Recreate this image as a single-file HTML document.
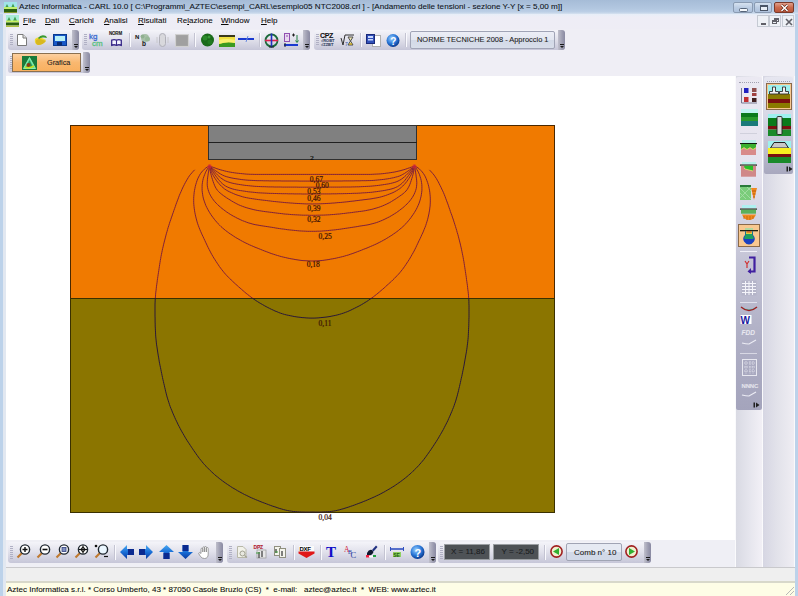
<!DOCTYPE html>
<html><head><meta charset="utf-8">
<style>
*{margin:0;padding:0;box-sizing:border-box}
html,body{width:798px;height:596px;overflow:hidden;background:#bcd2ea;font-family:"Liberation Sans",sans-serif;position:relative}
.a{position:absolute}
svg.a{overflow:visible}
#title{left:0;top:0;width:798px;height:14px;background:linear-gradient(#a6bcd7,#b2c7e0 60%,#bccfe6 85%,#d6e2f0)}
#lframe{left:3px;top:14px;width:3px;height:582px;background:#e2e8f1}
#menu{left:6px;top:14px;width:789px;height:15px;background:linear-gradient(#e6eef8,#eeedf6 20%,#eeedf5)}
#tbarea{left:6px;top:29px;width:789px;height:47px;background:#efeef5}
.tb{position:absolute;border-radius:3px;background:linear-gradient(#f4f4f9 0%,#e2e2ec 45%,#c6c6d8 100%)}
.grip{position:absolute;right:0;top:0;bottom:0;width:7px;border-radius:0 3px 3px 0;background:linear-gradient(90deg,#c0c0cc,#9c9cb0 60%,#8a8aa2)}
.grip:before{content:"";position:absolute;left:1.5px;bottom:5px;width:4px;height:1px;background:#1a1a1a}.grip:after{content:"";position:absolute;left:1.5px;bottom:2px;width:0;height:0;border-left:2px solid transparent;border-right:2px solid transparent;border-top:2.5px solid #1a1a1a}
.dots{position:absolute;left:2px;top:4px;bottom:4px;width:3px;background:repeating-linear-gradient(#b0b0c4 0 1px,transparent 1px 2px)}
.vsep{position:absolute;top:3px;bottom:3px;width:2px;border-left:1px solid #c4c4d2;border-right:1px solid #fafafe}
.ic{position:absolute}
#draw{left:6px;top:76px;width:729px;height:464px;background:#fff}
#dock{left:735px;top:76px;width:60px;height:491px;background:#fafafc}
#dockc1{left:736px;top:76px;width:26px;height:491px;background:linear-gradient(90deg,#d9dae3,#e4e4ec 45%,#f2f0f6)}
#dockc2{left:763px;top:76px;width:31px;height:491px;background:linear-gradient(90deg,#d6d6e3,#e2e2ea 45%,#efedf3)}
#btarea{left:6px;top:540px;width:729px;height:27px;background:#efeff5}
#bar2{left:6px;top:567px;width:789px;height:16px;background:#efefef;border-top:1px solid #c9c9cc;border-bottom:2px solid #d8d8ca}
#status{left:6px;top:583px;width:789px;height:13px;background:#fefde6}
#rframe{left:795px;top:14px;width:3px;height:582px;background:#bcd2ea}
.txt{position:absolute;white-space:nowrap;color:#0a0a0a;line-height:1;-webkit-text-stroke:0.08px currentColor}
.cap{position:absolute;top:2px;height:11px;border:1px solid #8a9bb2;border-radius:2px;background:linear-gradient(#d6e2f0,#bccde3 50%,#aec2dc)}
.mdi{position:absolute;top:15px;height:12px;width:12px;border:1px solid #c5cad3;background:#eef1f6}
</style></head><body>
<div id="title" class="a"></div>
<!-- title icon -->
<svg class="a" style="left:4px;top:2px" width="13" height="11"><rect width="13" height="6" fill="#a0e4e8"/><path d="M1 6L3 2L5 6M7 6L9 1.5L11 6" fill="#40a050"/><rect y="5" width="13" height="2" fill="#c0f070"/><rect y="7" width="13" height="3" fill="#2a6010"/><rect y="10" width="13" height="1" fill="#8a9a30"/></svg>
<div class="txt" id="ttl" style="left:19px;top:3.2px;font-size:8px;transform:scaleX(1.0136);transform-origin:0 0;color:#0e1420">Aztec Informatica - CARL 10.0 [ C:\Programmi_AZTEC\esempi_CARL\esempio05 NTC2008.crl ] - [Andamento delle tensioni - sezione Y-Y [x = 5,00 m]]</div>
<div class="cap" style="left:733px;width:20px"><div class="a" style="left:4.5px;top:5px;width:9px;height:3.5px;background:#f4f8fc;border:1px solid #56657a;border-radius:1.5px"></div></div>
<div class="cap" style="left:754px;width:18px"><div class="a" style="left:4.5px;top:2px;width:8px;height:6px;border:1px solid #4a5566;border-top-width:2px;background:#e8eef6"></div></div>
<div class="cap" style="left:774px;width:20px;border-color:#7a3a2a;background:linear-gradient(#e0a08c,#cc6a4c 50%,#b8553a)"><svg class="a" style="left:5px;top:1px" width="9" height="8"><path d="M1.5 1L7.5 7M7.5 1L1.5 7" stroke="#5a2010" stroke-width="2.6"/><path d="M1.5 1L7.5 7M7.5 1L1.5 7" stroke="#fff" stroke-width="1.5"/></svg></div>
<div id="lframe" class="a"></div>
<div id="rframe" class="a"></div>
<div id="menu" class="a"></div>
<!-- menu icon -->
<svg class="a" style="left:6px;top:15px" width="13" height="12"><rect width="13" height="6" fill="#a8ecd8"/><path d="M1 6L3 2L5 6M7 6L9 1.5L11 6" fill="#40a050"/><rect y="5.5" width="13" height="2" fill="#c8f060"/><rect y="7.5" width="13" height="3" fill="#2a6010"/><rect y="10.5" width="13" height="1.5" fill="#b0c040"/></svg>
<div class="txt" style="left:23px;top:17.2px;font-size:8px"><u>F</u>ile</div>
<div class="txt" style="left:45px;top:17.2px;font-size:8px"><u>D</u>ati</div>
<div class="txt" style="left:69px;top:17.2px;font-size:8px"><u>C</u>arichi</div>
<div class="txt" style="left:104px;top:17.2px;font-size:8px"><u>A</u>nalisi</div>
<div class="txt" style="left:138px;top:17.2px;font-size:8px"><u>R</u>isultati</div>
<div class="txt" style="left:177px;top:17.2px;font-size:8px">Re<u>l</u>azione</div>
<div class="txt" style="left:221px;top:17.2px;font-size:8px"><u>W</u>indow</div>
<div class="txt" style="left:261px;top:17.2px;font-size:8px"><u>H</u>elp</div>
<div class="mdi" style="left:757px"><div class="a" style="left:3px;top:7px;width:5px;height:2px;background:#606068"></div></div>
<div class="mdi" style="left:769px"><div class="a" style="left:4px;top:2px;width:5px;height:4px;border:1px solid #606068;border-top-width:2px"></div><div class="a" style="left:2px;top:4px;width:5px;height:4px;border:1px solid #606068;border-top-width:2px;background:#eef1f6"></div></div>
<div class="mdi" style="left:782px"><svg class="a" style="left:2px;top:2px" width="8" height="8"><path d="M1 1L7 7M7 1L1 7" stroke="#606068" stroke-width="1.6"/></svg></div>
<div id="tbarea" class="a"></div>
<div class="tb" style="left:8px;top:30px;width:71px;height:20px"><div class="dots"></div><div class="grip"></div></div>
<div class="tb" style="left:82px;top:30px;width:228px;height:20px"><div class="dots"></div><div class="grip"></div>
<div class="vsep" style="left:47px"></div><div class="vsep" style="left:112px"></div><div class="vsep" style="left:177px"></div></div>
<div class="tb" style="left:314px;top:30px;width:251px;height:20px"><div class="dots"></div><div class="grip"></div>
<div class="vsep" style="left:46px"></div><div class="vsep" style="left:91px"></div></div>
<div class="tb" style="left:8px;top:52px;width:82px;height:21px"><div class="dots"></div><div class="grip"></div></div>
<!-- seg1 icons -->
<svg class="a" style="left:16px;top:34px" width="11" height="12"><path d="M1.5 0.5H7L10.5 4V11.5H1.5Z" fill="#fff" stroke="#7a7a7a"/><path d="M7 0.5V4H10.5" fill="#e0e0e0" stroke="#7a7a7a"/></svg>
<svg class="a" style="left:34px;top:34px" width="14" height="12"><path d="M1 5 Q4 2 8 4 L12 6 Q9 11 4 11 Q0 10 1 5Z" fill="#f0d830"/><path d="M2 6 Q5 4 9 6 L12 7 Q9 11 4 11 Q1 10 2 6Z" fill="#d8b820"/><path d="M4 4 Q7 0 12 2 L13 4 L10 3.5 Q7 3 5 5Z" fill="#3a9a30"/></svg>
<svg class="a" style="left:53px;top:34px" width="14" height="12"><rect x="0.5" y="0.5" width="13" height="11" fill="#1858c8" stroke="#0a3a90"/><rect x="2" y="2" width="10" height="5" fill="#b8f0f8"/><rect x="4" y="8" width="5" height="3.5" fill="#0a2a70"/></svg>
<!-- seg2 icons -->
<div class="txt" style="left:89px;top:32.5px;font-size:8px;color:#3a6ad0;-webkit-text-stroke:0.3px currentColor">kg</div>
<div class="txt" style="left:92px;top:40px;font-size:8px;color:#58c080;-webkit-text-stroke:0.3px currentColor">cm</div>
<div class="txt" style="left:109px;top:32px;font-size:4.5px;font-weight:bold;color:#202020;letter-spacing:-0.2px">NORM</div>
<svg class="a" style="left:111px;top:38.5px" width="11" height="7"><path d="M0.7 1.2 Q3 0 5.5 1.2 Q8 0 10.3 1.2 V6.3 Q8 5.2 5.5 6.3 Q3 5.2 0.7 6.3Z" fill="#f4f4ff" stroke="#3a2a8a" stroke-width="1.3"/><line x1="5.5" y1="1.2" x2="5.5" y2="6.3" stroke="#3a2a8a" stroke-width="1.1"/></svg>
<div class="txt" style="left:135px;top:34px;font-size:6px;font-weight:bold;color:#202020">N</div>
<svg class="a" style="left:139px;top:33px" width="12" height="10"><circle cx="6" cy="5" r="4" fill="#a8c0a8"/><circle cx="3.5" cy="3.5" r="2" fill="#90b090"/><circle cx="8.5" cy="6" r="2.5" fill="#98b898"/></svg>
<div class="txt" style="left:142px;top:41px;font-size:6.5px;font-weight:bold;color:#202020">b</div>
<svg class="a" style="left:156px;top:33px" width="13" height="14"><rect x="3.5" y="0.5" width="6" height="13" rx="3" fill="#d8d8dc" stroke="#b0b0b8"/><line x1="1" y1="4" x2="1" y2="10" stroke="#c8c8cc"/><line x1="12" y1="4" x2="12" y2="10" stroke="#c8c8cc"/></svg>
<svg class="a" style="left:175px;top:34px" width="14" height="13"><rect x="0.5" y="0.5" width="13" height="12" fill="#a8a8a8" stroke="#d0d0d0"/><rect x="1.5" y="1.5" width="11" height="10" fill="#a0a0a0"/></svg>
<svg class="a" style="left:200px;top:33px" width="15" height="14"><circle cx="7.5" cy="7" r="6.5" fill="#1a6a1a"/><circle cx="5" cy="5" r="2.5" fill="#2a8a2a"/><circle cx="10" cy="9" r="2.5" fill="#207a20"/><circle cx="9" cy="4" r="1.5" fill="#3a9a3a"/></svg>
<svg class="a" style="left:219px;top:35px" width="16" height="12"><rect x="0" y="0" width="16" height="2" fill="#3a3a1a"/><path d="M0 2H16V9Q8 7 0 12Z" fill="#f0e040"/><path d="M0 9Q8 6 16 8V12H0Z" fill="#3a9a20"/><path d="M0 5Q8 3 16 5V8Q8 6 0 9Z" fill="#f8f070"/></svg>
<svg class="a" style="left:238px;top:35px" width="16" height="8"><line x1="0" y1="4" x2="16" y2="4" stroke="#1a3ad0" stroke-width="2"/><line x1="10" y1="1" x2="8" y2="7" stroke="#6a8ae0" stroke-width="1"/></svg>
<svg class="a" style="left:264px;top:33px" width="15" height="15"><circle cx="7.5" cy="7.5" r="6" fill="none" stroke="#1a6a3a" stroke-width="1.8"/><line x1="1" y1="7.5" x2="14" y2="7.5" stroke="#e02050" stroke-width="1.6"/><line x1="7.5" y1="0.5" x2="7.5" y2="14.5" stroke="#2030c0" stroke-width="1.6"/><path d="M5 14H10" stroke="#202020"/></svg>
<svg class="a" style="left:283px;top:33px" width="16" height="15"><rect x="1.5" y="0.5" width="5" height="8" fill="#e8d8f0" stroke="#9050b0"/><line x1="3" y1="3" x2="5" y2="3" stroke="#9050b0"/><path d="M9 2H12M10.5 0.5V3.5" stroke="#202020"/><path d="M14 2V9M12.5 7.5L14 9.5L15.5 7.5" stroke="#208040" fill="none"/><path d="M1 12H15" stroke="#1a3ad0" stroke-width="2"/><path d="M2 10V14" stroke="#202020"/></svg>
<!-- seg3 icons -->
<div class="txt" style="left:320px;top:32px;font-size:7px;font-weight:bold;color:#101010;letter-spacing:-0.3px">CPZ</div>
<div class="txt" style="left:321px;top:39px;font-size:4px;font-weight:bold;color:#304060">&#x221A;ROBT</div>
<div class="txt" style="left:321px;top:43px;font-size:4px;font-weight:bold;color:#304060">&#x221A;ZZBT</div>
<svg class="a" style="left:340px;top:33px" width="15" height="14"><path d="M1 5L3 12L5 2H14" fill="none" stroke="#303030" stroke-width="1"/><path d="M8 4H13L10.5 8L13 12H8L10.5 8Z" fill="#f0e8b0" stroke="#505050"/><path d="M9 11H12" stroke="#c0a020" stroke-width="1.5"/><text x="5" y="13" font-size="5" fill="#3050a0" font-family="Liberation Sans">7</text></svg>
<svg class="a" style="left:366px;top:33px" width="15" height="14"><rect x="6.5" y="2.5" width="8" height="11" fill="#fff" stroke="#b0b0b0"/><rect x="0.5" y="1.5" width="8" height="9" fill="#3050b8" stroke="#1a2a7a"/><rect x="2" y="3" width="5" height="2" fill="#c8d8ff"/><rect x="2" y="6" width="5" height="1.5" fill="#c8d8ff"/></svg>
<svg class="a" style="left:386px;top:34px" width="14" height="13"><defs><radialGradient id="hg" cx="40%" cy="35%" r="65%"><stop offset="0" stop-color="#9ad0ff"/><stop offset="0.6" stop-color="#2a78d8"/><stop offset="1" stop-color="#0a3a90"/></radialGradient></defs><circle cx="7" cy="6.5" r="6.5" fill="url(#hg)"/><text x="4.2" y="10.5" font-size="10" font-weight="bold" fill="#fff" font-family="Liberation Sans">?</text></svg>
<!-- combo -->
<div class="a" style="left:410px;top:31px;width:145px;height:18px;border:1px solid #a0a4b6;border-radius:2px;background:linear-gradient(#eceef6,#e2e6f0 50%,#d2d9e7 50%,#d8deea)"></div>
<div class="txt" id="combo" style="left:416.5px;top:35.7px;font-size:8px;transform:scaleX(0.928);transform-origin:0 0;color:#202020">NORME TECNICHE 2008 - Approccio 1</div>
<!-- Grafica -->
<div class="a" style="left:12px;top:53px;width:69px;height:19px;border:1px solid #8a7050;background:linear-gradient(#fdd0a0,#f9b870 50%,#f8b060)"></div>
<svg class="a" style="left:22px;top:56px" width="15" height="14"><rect width="15" height="14" fill="#1a7a3a"/><path d="M7.5 1.5L13.5 12.5H1.5Z" fill="#60e0a0" stroke="#a0ffc0" stroke-width="0.8"/><path d="M7.5 4L11 11H4Z" fill="#2a9a5a"/><circle cx="6.5" cy="9" r="2" fill="#8a3a10"/><path d="M3 11Q7 13 12 10" stroke="#c8e020" stroke-width="1.5" fill="none"/></svg>
<div class="txt" id="graf" style="left:47.4px;top:58.7px;font-size:8px;transform:scaleX(0.907);transform-origin:0 0;color:#202020">Grafica</div>

<div id="draw" class="a"></div>
<svg class="a" style="left:0;top:0" width="798" height="596" viewBox="0 0 798 596">
<defs><clipPath id="cu"><rect x="70" y="125" width="485" height="173"/></clipPath><clipPath id="cl"><rect x="70" y="298" width="485" height="215"/></clipPath></defs>
<rect x="70.5" y="125.5" width="484" height="173" fill="#f07a00" stroke="#4a2800" stroke-width="1"/>
<rect x="70.5" y="298.5" width="484" height="214" fill="#8b7500" stroke="#3a3000" stroke-width="1"/>
<rect x="208.5" y="125.5" width="208" height="34" fill="#808080" stroke="#303030" stroke-width="1"/>
<line x1="208" y1="142.5" x2="417" y2="142.5" stroke="#202020" stroke-width="1"/>
<g fill="none" stroke-width="1" clip-path="url(#cu)" stroke="#80203a" stroke-opacity="1">
<path d="M209.4 166.0 L211.3 166.7 L213.2 167.3 L215.1 168.0 L216.9 168.7 L218.8 169.3 L220.8 169.9 L222.7 170.4 L224.6 170.9 L226.5 171.4 L228.5 171.8 L230.5 172.2 L232.4 172.5 L234.4 172.8 L236.4 173.1 L238.4 173.3 L240.4 173.5 L242.4 173.7 L244.3 173.9 L246.3 174.1 L248.3 174.2 L250.3 174.3 L252.3 174.3 L254.3 174.4 L256.3 174.4 L258.3 174.4 L260.3 174.4 L262.3 174.4 L264.3 174.4 L266.3 174.4 L268.3 174.4 L270.3 174.4 L272.3 174.4 L274.3 174.4 L276.3 174.4 L278.3 174.4 L280.3 174.4 L282.3 174.4 L284.3 174.4 L286.3 174.4 L288.3 174.4 L290.3 174.4 L292.3 174.4 L294.3 174.4 L296.3 174.4 L298.3 174.4 L300.3 174.4 L302.3 174.4 L304.3 174.4 L306.3 174.4 L308.3 174.4 L310.3 174.4 L312.3 174.4 L314.3 174.4 L316.3 174.4 L318.3 174.4 L320.3 174.4 L322.3 174.4 L324.3 174.4 L326.3 174.4 L328.3 174.4 L330.3 174.4 L332.3 174.4 L334.3 174.4 L336.3 174.4 L338.3 174.4 L340.3 174.4 L342.3 174.4 L344.3 174.4 L346.3 174.4 L348.3 174.4 L350.3 174.4 L352.3 174.4 L354.3 174.4 L356.3 174.4 L358.3 174.4 L360.3 174.4 L362.3 174.4 L364.3 174.4 L366.3 174.4 L368.3 174.4 L370.3 174.4 L372.3 174.3 L374.3 174.2 L376.3 174.1 L378.3 174.0 L380.3 173.9 L382.3 173.7 L384.3 173.5 L386.3 173.2 L388.3 173.0 L390.2 172.7 L392.2 172.4 L394.2 172.1 L396.1 171.7 L398.1 171.2 L400.0 170.8 L402.0 170.2 L403.9 169.7 L405.8 169.1 L407.7 168.4 L409.5 167.8 L411.4 167.1 L413.2 166.5 L414.6 166.0 L414.6 166.0"/>
<path d="M209.4 166.0 L211.0 167.2 L212.6 168.5 L214.1 169.7 L215.8 170.9 L217.4 172.0 L219.0 173.1 L220.7 174.1 L222.5 175.1 L224.3 175.9 L226.2 176.6 L228.1 177.1 L230.0 177.6 L231.9 178.0 L233.9 178.4 L235.9 178.7 L237.9 179.0 L239.8 179.3 L241.8 179.6 L243.8 179.8 L245.8 180.0 L247.8 180.2 L249.8 180.3 L251.8 180.4 L253.8 180.5 L255.8 180.6 L257.8 180.7 L259.8 180.7 L261.8 180.7 L263.8 180.8 L265.8 180.8 L267.8 180.8 L269.8 180.9 L271.8 180.9 L273.8 180.9 L275.8 180.9 L277.8 180.9 L279.8 180.9 L281.8 181.0 L283.8 181.0 L285.8 181.0 L287.8 181.0 L289.8 181.0 L291.8 181.0 L293.8 181.0 L295.8 181.0 L297.8 181.0 L299.8 181.1 L301.8 181.1 L303.8 181.1 L305.8 181.1 L307.8 181.1 L309.8 181.1 L311.8 181.1 L313.8 181.1 L315.8 181.1 L317.8 181.1 L319.8 181.1 L321.8 181.1 L323.8 181.1 L325.8 181.1 L327.8 181.0 L329.8 181.0 L331.8 181.0 L333.8 181.0 L335.8 181.0 L337.8 181.0 L339.8 181.0 L341.8 181.0 L343.8 180.9 L345.8 180.9 L347.8 180.9 L349.8 180.9 L351.8 180.9 L353.8 180.9 L355.8 180.8 L357.8 180.8 L359.8 180.8 L361.8 180.7 L363.8 180.7 L365.8 180.7 L367.8 180.6 L369.8 180.6 L371.8 180.5 L373.8 180.4 L375.7 180.2 L377.7 180.0 L379.7 179.8 L381.7 179.6 L383.7 179.4 L385.7 179.1 L387.7 178.8 L389.6 178.5 L391.6 178.1 L393.6 177.7 L395.5 177.2 L397.4 176.7 L399.3 176.1 L401.1 175.3 L402.8 174.4 L404.6 173.4 L406.2 172.3 L407.9 171.1 L409.5 170.0 L411.0 168.8 L412.6 167.6 L414.1 166.4 L414.6 166.0"/>
<path d="M209.4 166.0 L210.7 167.5 L212.0 169.1 L213.3 170.6 L214.7 172.0 L216.0 173.5 L217.4 174.9 L218.9 176.3 L220.4 177.6 L222.0 178.8 L223.6 179.8 L225.3 180.8 L227.2 181.6 L229.0 182.2 L230.9 182.8 L232.9 183.3 L234.8 183.7 L236.8 184.1 L238.7 184.4 L240.7 184.7 L242.7 185.0 L244.7 185.3 L246.7 185.5 L248.6 185.7 L250.6 185.9 L252.6 186.1 L254.6 186.3 L256.6 186.4 L258.6 186.5 L260.6 186.6 L262.6 186.7 L264.6 186.7 L266.6 186.8 L268.6 186.9 L270.6 186.9 L272.6 186.9 L274.6 187.0 L276.6 187.0 L278.6 187.0 L280.6 187.0 L282.6 187.1 L284.6 187.1 L286.6 187.1 L288.6 187.1 L290.6 187.1 L292.6 187.1 L294.6 187.1 L296.6 187.1 L298.6 187.2 L300.6 187.2 L302.6 187.2 L304.6 187.2 L306.6 187.2 L308.6 187.2 L310.6 187.2 L312.6 187.2 L314.6 187.2 L316.6 187.2 L318.6 187.2 L320.6 187.2 L322.6 187.2 L324.6 187.2 L326.6 187.2 L328.6 187.1 L330.6 187.1 L332.6 187.1 L334.6 187.1 L336.6 187.1 L338.6 187.1 L340.6 187.1 L342.6 187.0 L344.6 187.0 L346.6 187.0 L348.6 187.0 L350.6 187.0 L352.6 186.9 L354.6 186.9 L356.6 186.8 L358.6 186.8 L360.6 186.7 L362.6 186.6 L364.6 186.5 L366.6 186.4 L368.6 186.3 L370.6 186.2 L372.6 186.0 L374.6 185.8 L376.6 185.6 L378.5 185.4 L380.5 185.1 L382.5 184.8 L384.5 184.5 L386.5 184.2 L388.4 183.9 L390.4 183.5 L392.3 183.0 L394.2 182.5 L396.1 181.9 L398.0 181.1 L399.7 180.2 L401.4 179.2 L403.0 178.0 L404.5 176.8 L406.0 175.4 L407.4 174.0 L408.8 172.6 L410.2 171.1 L411.5 169.7 L412.8 168.2 L414.1 166.7 L414.6 166.0"/>
<path d="M209.4 166.0 L210.4 167.7 L211.4 169.5 L212.5 171.2 L213.6 172.8 L214.7 174.5 L215.9 176.1 L217.1 177.7 L218.3 179.3 L219.6 180.8 L220.9 182.3 L222.3 183.6 L223.9 184.9 L225.5 186.0 L227.2 186.9 L229.0 187.7 L230.9 188.4 L232.8 189.0 L234.7 189.5 L236.6 189.9 L238.6 190.3 L240.6 190.6 L242.6 190.9 L244.5 191.2 L246.5 191.5 L248.5 191.8 L250.5 192.0 L252.5 192.2 L254.5 192.4 L256.4 192.6 L258.4 192.8 L260.4 192.9 L262.4 193.0 L264.4 193.1 L266.4 193.2 L268.4 193.3 L270.4 193.4 L272.4 193.4 L274.4 193.5 L276.4 193.5 L278.4 193.6 L280.4 193.6 L282.4 193.7 L284.4 193.7 L286.4 193.7 L288.4 193.8 L290.4 193.8 L292.4 193.8 L294.4 193.9 L296.4 193.9 L298.4 193.9 L300.4 193.9 L302.4 194.0 L304.4 194.0 L306.4 194.0 L308.4 194.0 L310.4 194.0 L312.4 194.0 L314.4 194.0 L316.4 194.0 L318.4 194.0 L320.4 194.0 L322.4 193.9 L324.4 193.9 L326.4 193.9 L328.4 193.9 L330.4 193.9 L332.4 193.8 L334.4 193.8 L336.4 193.8 L338.4 193.7 L340.4 193.7 L342.4 193.7 L344.4 193.6 L346.4 193.6 L348.4 193.5 L350.4 193.5 L352.4 193.4 L354.4 193.3 L356.4 193.3 L358.4 193.2 L360.4 193.1 L362.4 192.9 L364.4 192.8 L366.4 192.7 L368.4 192.5 L370.4 192.4 L372.4 192.2 L374.3 191.9 L376.3 191.7 L378.3 191.4 L380.3 191.1 L382.3 190.8 L384.2 190.5 L386.2 190.1 L388.2 189.7 L390.1 189.3 L392.0 188.8 L393.9 188.2 L395.8 187.4 L397.5 186.6 L399.2 185.5 L400.8 184.4 L402.3 183.1 L403.7 181.7 L405.0 180.2 L406.2 178.6 L407.4 177.0 L408.6 175.4 L409.8 173.8 L410.9 172.1 L412.0 170.5 L413.0 168.8 L414.0 167.0 L414.5 166.2"/>
<path d="M209.4 166.0 L210.0 167.9 L210.7 169.8 L211.4 171.6 L212.2 173.5 L213.1 175.2 L214.1 177.0 L215.2 178.6 L216.3 180.3 L217.5 181.9 L218.8 183.4 L220.1 184.9 L221.5 186.3 L223.0 187.6 L224.5 188.9 L226.2 190.0 L227.9 191.0 L229.7 191.9 L231.5 192.7 L233.3 193.5 L235.1 194.3 L237.0 195.0 L238.9 195.6 L240.8 196.2 L242.7 196.8 L244.7 197.3 L246.6 197.7 L248.6 198.1 L250.5 198.4 L252.5 198.7 L254.5 199.0 L256.5 199.3 L258.5 199.6 L260.4 199.8 L262.4 200.1 L264.4 200.3 L266.4 200.5 L268.4 200.8 L270.4 201.0 L272.4 201.3 L274.3 201.5 L276.3 201.7 L278.3 201.9 L280.3 202.1 L282.3 202.3 L284.3 202.5 L286.3 202.7 L288.3 202.8 L290.3 203.0 L292.3 203.1 L294.3 203.3 L296.2 203.4 L298.2 203.5 L300.2 203.6 L302.2 203.7 L304.2 203.8 L306.2 203.9 L308.2 203.9 L310.2 203.9 L312.2 204.0 L314.2 203.9 L316.2 203.9 L318.2 203.9 L320.2 203.8 L322.2 203.7 L324.2 203.6 L326.2 203.5 L328.2 203.4 L330.2 203.3 L332.2 203.1 L334.2 203.0 L336.2 202.8 L338.2 202.6 L340.2 202.5 L342.2 202.3 L344.2 202.1 L346.2 201.9 L348.1 201.7 L350.1 201.4 L352.1 201.2 L354.1 201.0 L356.1 200.7 L358.1 200.5 L360.1 200.2 L362.0 200.0 L364.0 199.7 L366.0 199.5 L368.0 199.2 L370.0 199.0 L372.0 198.7 L373.9 198.3 L375.9 198.0 L377.9 197.6 L379.8 197.2 L381.7 196.7 L383.7 196.1 L385.6 195.5 L387.4 194.8 L389.3 194.1 L391.1 193.4 L393.0 192.6 L394.8 191.7 L396.5 190.7 L398.2 189.7 L399.8 188.6 L401.4 187.3 L402.8 186.0 L404.2 184.6 L405.5 183.1 L406.8 181.5 L407.9 179.9 L409.1 178.2 L410.1 176.6 L411.1 174.8 L411.9 173.0 L412.7 171.2 L413.5 169.4 L414.1 167.5 L414.6 166.0 L414.6 166.0"/>
<path d="M209.4 166.0 L209.7 168.0 L210.0 169.9 L210.4 171.9 L210.9 173.9 L211.4 175.8 L211.9 177.7 L212.5 179.6 L213.1 181.5 L213.8 183.4 L214.5 185.2 L215.3 187.0 L216.3 188.7 L217.4 190.3 L218.8 191.7 L220.2 193.1 L221.7 194.3 L223.3 195.5 L225.0 196.7 L226.6 197.8 L228.3 198.9 L230.0 199.9 L231.7 201.0 L233.4 202.0 L235.2 203.0 L236.9 203.9 L238.7 204.8 L240.6 205.6 L242.4 206.3 L244.3 207.0 L246.2 207.6 L248.1 208.2 L250.0 208.7 L252.0 209.2 L253.9 209.7 L255.8 210.1 L257.8 210.5 L259.8 210.8 L261.8 211.1 L263.7 211.4 L265.7 211.7 L267.7 211.9 L269.7 212.2 L271.7 212.4 L273.7 212.7 L275.6 212.9 L277.6 213.2 L279.6 213.4 L281.6 213.6 L283.6 213.9 L285.6 214.1 L287.6 214.2 L289.6 214.4 L291.5 214.6 L293.5 214.7 L295.5 214.8 L297.5 214.9 L299.5 215.0 L301.5 215.1 L303.5 215.2 L305.5 215.2 L307.5 215.2 L309.5 215.3 L311.5 215.3 L313.5 215.3 L315.5 215.3 L317.5 215.2 L319.5 215.2 L321.5 215.1 L323.5 215.1 L325.5 215.0 L327.5 214.9 L329.5 214.8 L331.5 214.6 L333.5 214.5 L335.5 214.3 L337.5 214.1 L339.5 214.0 L341.5 213.7 L343.5 213.5 L345.4 213.3 L347.4 213.0 L349.4 212.8 L351.4 212.6 L353.4 212.3 L355.4 212.0 L357.4 211.8 L359.3 211.5 L361.3 211.3 L363.3 211.0 L365.3 210.7 L367.2 210.3 L369.2 209.9 L371.1 209.5 L373.1 209.0 L375.0 208.4 L376.9 207.9 L378.8 207.3 L380.7 206.6 L382.6 205.9 L384.4 205.1 L386.2 204.3 L388.0 203.4 L389.8 202.5 L391.5 201.5 L393.2 200.4 L394.9 199.4 L396.6 198.3 L398.2 197.2 L399.9 196.0 L401.5 194.9 L403.1 193.7 L404.6 192.4 L406.0 191.0 L407.2 189.5 L408.2 187.8 L409.1 186.1 L409.9 184.3 L410.6 182.4 L411.2 180.5 L411.8 178.6 L412.4 176.7 L412.9 174.8 L413.4 172.8 L413.8 170.9 L414.1 168.9 L414.5 166.9 L414.6 166.0"/>
<path d="M209.4 166.0 L209.1 168.0 L208.8 170.0 L208.5 171.9 L208.2 173.9 L207.9 175.9 L207.6 177.9 L207.4 179.8 L207.3 181.8 L207.2 183.8 L207.3 185.8 L207.6 187.7 L208.1 189.6 L208.7 191.5 L209.4 193.3 L210.3 195.1 L211.3 196.9 L212.4 198.5 L213.5 200.1 L214.8 201.7 L216.1 203.1 L217.5 204.5 L219.0 205.9 L220.5 207.2 L222.0 208.5 L223.6 209.7 L225.2 210.9 L226.8 212.1 L228.5 213.2 L230.2 214.3 L231.9 215.3 L233.6 216.3 L235.4 217.2 L237.2 218.2 L239.0 219.0 L240.8 219.9 L242.6 220.7 L244.5 221.4 L246.3 222.1 L248.2 222.8 L250.1 223.3 L252.1 223.9 L254.0 224.4 L255.9 224.8 L257.9 225.1 L259.9 225.5 L261.9 225.8 L263.8 226.1 L265.8 226.4 L267.8 226.7 L269.8 227.0 L271.7 227.3 L273.7 227.6 L275.7 228.0 L277.7 228.3 L279.6 228.6 L281.6 228.9 L283.6 229.1 L285.6 229.4 L287.6 229.7 L289.5 229.9 L291.5 230.1 L293.5 230.3 L295.5 230.5 L297.5 230.7 L299.5 230.9 L301.5 231.0 L303.5 231.1 L305.5 231.2 L307.5 231.3 L309.5 231.3 L311.5 231.3 L313.5 231.3 L315.5 231.3 L317.5 231.2 L319.5 231.2 L321.5 231.1 L323.5 230.9 L325.5 230.8 L327.5 230.6 L329.4 230.4 L331.4 230.2 L333.4 230.0 L335.4 229.8 L337.4 229.5 L339.4 229.3 L341.4 229.0 L343.3 228.7 L345.3 228.4 L347.3 228.1 L349.3 227.8 L351.2 227.5 L353.2 227.2 L355.2 226.9 L357.2 226.6 L359.1 226.2 L361.1 225.9 L363.1 225.6 L365.1 225.3 L367.0 225.0 L369.0 224.6 L370.9 224.1 L372.9 223.6 L374.8 223.1 L376.7 222.5 L378.6 221.8 L380.4 221.1 L382.3 220.3 L384.1 219.5 L385.9 218.6 L387.7 217.7 L389.5 216.8 L391.2 215.8 L392.9 214.8 L394.6 213.7 L396.3 212.7 L397.9 211.5 L399.6 210.3 L401.1 209.1 L402.7 207.9 L404.2 206.6 L405.7 205.2 L407.1 203.9 L408.5 202.4 L409.8 200.9 L411.0 199.3 L412.2 197.7 L413.2 196.0 L414.1 194.3 L414.9 192.5 L415.6 190.6 L416.2 188.7 L416.5 186.8 L416.7 184.8 L416.8 182.8 L416.7 180.9 L416.5 178.9 L416.2 176.9 L416.0 174.9 L415.7 172.9 L415.4 171.0 L415.1 169.0 L414.8 167.0 L414.6 166.0"/>
<path d="M209.4 166.0 L208.3 167.7 L207.2 169.3 L206.2 171.1 L205.3 172.9 L204.6 174.7 L203.9 176.5 L203.3 178.4 L202.8 180.4 L202.5 182.3 L202.2 184.3 L202.1 186.3 L202.1 188.3 L202.1 190.3 L202.3 192.2 L202.6 194.2 L202.9 196.2 L203.3 198.1 L203.9 200.1 L204.5 201.9 L205.2 203.8 L205.9 205.7 L206.8 207.5 L207.7 209.2 L208.7 211.0 L209.7 212.7 L210.8 214.4 L211.9 216.0 L213.1 217.6 L214.3 219.2 L215.6 220.8 L216.9 222.3 L218.2 223.8 L219.6 225.2 L221.0 226.6 L222.5 227.9 L224.0 229.2 L225.6 230.5 L227.2 231.7 L228.8 232.9 L230.4 234.0 L232.1 235.1 L233.7 236.2 L235.4 237.3 L237.1 238.3 L238.9 239.3 L240.6 240.3 L242.4 241.3 L244.1 242.2 L245.9 243.1 L247.7 243.9 L249.5 244.8 L251.4 245.6 L253.2 246.4 L255.0 247.2 L256.9 247.9 L258.8 248.7 L260.6 249.4 L262.5 250.2 L264.3 250.9 L266.2 251.6 L268.1 252.3 L269.9 253.0 L271.8 253.7 L273.7 254.3 L275.6 254.9 L277.5 255.5 L279.5 256.1 L281.4 256.6 L283.3 257.1 L285.3 257.5 L287.2 258.0 L289.2 258.4 L291.1 258.8 L293.1 259.1 L295.1 259.5 L297.0 259.8 L299.0 260.1 L301.0 260.4 L303.0 260.6 L305.0 260.7 L307.0 260.8 L309.0 260.9 L311.0 261.0 L313.0 261.0 L315.0 260.9 L317.0 260.9 L319.0 260.7 L321.0 260.6 L322.9 260.4 L324.9 260.1 L326.9 259.8 L328.9 259.5 L330.8 259.1 L332.8 258.8 L334.8 258.4 L336.7 258.0 L338.7 257.5 L340.6 257.1 L342.6 256.6 L344.5 256.1 L346.4 255.5 L348.3 255.0 L350.2 254.3 L352.1 253.7 L354.0 253.0 L355.9 252.3 L357.7 251.6 L359.6 250.9 L361.5 250.2 L363.3 249.4 L365.2 248.7 L367.0 248.0 L368.9 247.2 L370.7 246.4 L372.6 245.6 L374.4 244.8 L376.2 244.0 L378.0 243.1 L379.8 242.2 L381.6 241.3 L383.3 240.3 L385.1 239.4 L386.8 238.3 L388.5 237.3 L390.2 236.2 L391.9 235.2 L393.5 234.0 L395.2 232.9 L396.8 231.7 L398.4 230.5 L399.9 229.2 L401.5 227.9 L402.9 226.6 L404.4 225.2 L405.8 223.8 L407.1 222.3 L408.4 220.8 L409.7 219.2 L410.9 217.7 L412.0 216.0 L413.2 214.4 L414.3 212.7 L415.3 211.0 L416.3 209.3 L417.2 207.5 L418.0 205.7 L418.8 203.9 L419.5 202.0 L420.1 200.1 L420.6 198.2 L421.1 196.2 L421.4 194.3 L421.7 192.3 L421.9 190.3 L421.9 188.3 L421.9 186.3 L421.8 184.4 L421.5 182.4 L421.2 180.4 L420.7 178.5 L420.1 176.6 L419.5 174.7 L418.7 172.9 L417.8 171.1 L416.8 169.4 L415.8 167.7 L414.6 166.0 L414.6 166.0"/>
<path d="M209.4 166.0 L207.6 166.8 L205.9 167.9 L204.4 169.2 L203.0 170.6 L201.7 172.0 L200.5 173.6 L199.5 175.3 L198.6 177.0 L197.7 178.9 L197.0 180.7 L196.4 182.6 L195.8 184.5 L195.3 186.4 L194.9 188.4 L194.5 190.4 L194.2 192.3 L194.0 194.3 L193.8 196.3 L193.7 198.3 L193.7 200.3 L193.7 202.3 L193.8 204.3 L194.0 206.3 L194.2 208.2 L194.5 210.2 L194.8 212.2 L195.2 214.2 L195.6 216.1 L196.1 218.1 L196.6 220.0 L197.1 221.9 L197.7 223.8 L198.4 225.7 L199.1 227.6 L199.8 229.4 L200.6 231.3 L201.4 233.1 L202.2 234.9 L203.1 236.7 L203.9 238.5 L204.8 240.4 L205.6 242.2 L206.5 244.0 L207.3 245.8 L208.2 247.6 L209.1 249.4 L210.0 251.1 L210.9 252.9 L211.9 254.7 L212.9 256.4 L213.9 258.1 L215.0 259.8 L216.1 261.5 L217.2 263.2 L218.3 264.8 L219.4 266.5 L220.6 268.1 L221.8 269.7 L223.0 271.2 L224.3 272.8 L225.6 274.3 L227.0 275.8 L228.4 277.2 L229.8 278.6 L231.2 280.0 L232.7 281.4 L234.1 282.7 L235.6 284.1 L237.1 285.4 L238.6 286.8 L240.1 288.1 L241.6 289.4 L243.1 290.7 L244.6 292.0 L246.1 293.3 L247.7 294.5 L249.3 295.8 L250.9 297.0 L252.5 298.2 L254.1 299.3 L255.8 300.5 L257.4 301.5 L259.1 302.6 L260.8 303.6 L262.6 304.6 L264.3 305.6 L266.1 306.6 L267.8 307.5 L269.6 308.4 L271.4 309.3 L273.2 310.1 L275.0 311.0 L276.9 311.7 L278.7 312.5 L280.6 313.2 L282.5 313.8 L284.4 314.4 L286.4 314.9 L288.3 315.3 L290.2 315.7 L292.2 316.1 L294.2 316.5 L296.1 316.8 L298.1 317.1 L300.1 317.3 L302.1 317.6 L304.1 317.7 L306.1 317.9 L308.1 318.0 L310.1 318.1 L312.1 318.1 L314.1 318.1 L316.1 318.0 L318.1 317.9 L320.1 317.7 L322.0 317.5 L324.0 317.3 L326.0 317.1 L328.0 316.8 L330.0 316.5 L331.9 316.1 L333.9 315.7 L335.8 315.3 L337.8 314.8 L339.7 314.3 L341.6 313.7 L343.5 313.1 L345.4 312.4 L347.3 311.7 L349.1 310.9 L350.9 310.1 L352.7 309.2 L354.5 308.3 L356.3 307.4 L358.1 306.5 L359.8 305.6 L361.6 304.6 L363.3 303.6 L365.0 302.5 L366.7 301.5 L368.4 300.4 L370.0 299.2 L371.6 298.1 L373.3 296.9 L374.8 295.7 L376.4 294.5 L378.0 293.2 L379.5 291.9 L381.0 290.6 L382.6 289.3 L384.1 288.0 L385.5 286.7 L387.0 285.3 L388.5 284.0 L390.0 282.6 L391.5 281.3 L392.9 279.9 L394.3 278.5 L395.7 277.1 L397.1 275.6 L398.5 274.2 L399.8 272.7 L401.1 271.1 L402.3 269.6 L403.5 268.0 L404.7 266.3 L405.8 264.7 L406.9 263.0 L408.0 261.4 L409.1 259.7 L410.1 258.0 L411.1 256.3 L412.1 254.5 L413.1 252.8 L414.1 251.0 L415.0 249.2 L415.9 247.4 L416.7 245.6 L417.6 243.8 L418.4 242.0 L419.3 240.2 L420.2 238.4 L421.0 236.6 L421.8 234.8 L422.7 233.0 L423.5 231.1 L424.2 229.3 L425.0 227.4 L425.7 225.6 L426.3 223.7 L426.9 221.8 L427.5 219.8 L428.0 217.9 L428.4 216.0 L428.9 214.0 L429.2 212.1 L429.6 210.1 L429.8 208.1 L430.1 206.1 L430.2 204.1 L430.3 202.1 L430.3 200.1 L430.3 198.1 L430.2 196.2 L430.0 194.2 L429.8 192.2 L429.5 190.2 L429.1 188.3 L428.7 186.3 L428.2 184.4 L427.6 182.5 L426.9 180.6 L426.2 178.7 L425.4 176.9 L424.5 175.2 L423.4 173.5 L422.2 171.9 L420.9 170.5 L419.5 169.1 L418.0 167.9 L416.3 166.8 L414.6 166.0 L414.6 166.0"/>
<path d="M194.7 169.8 L193.3 171.2 L192.0 172.7 L190.7 174.2 L189.4 175.8 L188.3 177.5 L187.3 179.2 L186.3 180.9 L185.3 182.7 L184.4 184.4 L183.5 186.2 L182.6 188.0 L181.8 189.8 L181.0 191.7 L180.2 193.5 L179.4 195.3 L178.7 197.2 L178.0 199.1 L177.3 200.9 L176.6 202.8 L175.9 204.7 L175.3 206.6 L174.6 208.5 L173.9 210.4 L173.3 212.3 L172.6 214.1 L172.0 216.0 L171.3 217.9 L170.7 219.8 L170.0 221.7 L169.4 223.6 L168.8 225.5 L168.2 227.4 L167.6 229.4 L167.1 231.3 L166.5 233.2 L166.0 235.1 L165.5 237.1 L165.0 239.0 L164.5 240.9 L164.0 242.9 L163.5 244.8 L163.1 246.8 L162.6 248.7 L162.2 250.7 L161.8 252.6 L161.4 254.6 L161.0 256.5 L160.7 258.5 L160.3 260.5 L160.0 262.5 L159.7 264.4 L159.4 266.4 L159.1 268.4 L158.8 270.4 L158.5 272.3 L158.2 274.3 L157.9 276.3 L157.6 278.3 L157.3 280.3 L157.1 282.2 L156.8 284.2 L156.5 286.2 L156.3 288.2 L156.1 290.2 L155.8 292.2 L155.6 294.2 L155.5 296.1 L155.3 298.1 L155.2 300.1 L155.1 302.1 L155.0 304.1 L155.0 306.1 L155.0 308.1 L155.0 310.1 L155.0 312.1 L155.0 314.1 L155.0 316.1 L155.1 318.1 L155.1 320.1 L155.1 322.1 L155.2 324.1 L155.2 326.1 L155.3 328.1 L155.4 330.1 L155.5 332.1 L155.6 334.1 L155.7 336.1 L155.9 338.1 L156.1 340.1 L156.3 342.1 L156.5 344.1 L156.8 346.1 L157.1 348.0 L157.4 350.0 L157.7 352.0 L158.0 354.0 L158.3 355.9 L158.7 357.9 L159.0 359.9 L159.3 361.9 L159.7 363.8 L160.1 365.8 L160.5 367.7 L160.9 369.7 L161.3 371.7 L161.7 373.6 L162.1 375.6 L162.5 377.5 L162.9 379.5 L163.4 381.4 L163.8 383.4 L164.3 385.3 L164.7 387.3 L165.2 389.2 L165.6 391.2 L166.1 393.1 L166.6 395.1 L167.1 397.0 L167.7 398.9 L168.3 400.8 L168.9 402.7 L169.5 404.6 L170.2 406.5 L170.9 408.4 L171.7 410.2 L172.4 412.1 L173.2 413.9 L174.0 415.8 L174.8 417.6 L175.6 419.4 L176.5 421.2 L177.4 423.0 L178.2 424.8 L179.2 426.6 L180.1 428.4 L181.0 430.1 L182.0 431.9 L183.0 433.6 L184.0 435.3 L185.0 437.1 L186.0 438.8 L187.1 440.5 L188.2 442.2 L189.3 443.8 L190.4 445.5 L191.5 447.2 L192.6 448.8 L193.7 450.5 L194.9 452.1 L196.0 453.8 L197.2 455.4 L198.3 457.0 L199.5 458.6 L200.8 460.2 L202.0 461.7 L203.3 463.3 L204.6 464.8 L206.0 466.2 L207.4 467.7 L208.8 469.1 L210.2 470.5 L211.7 471.9 L213.1 473.2 L214.6 474.6 L216.1 475.9 L217.7 477.1 L219.2 478.4 L220.8 479.6 L222.4 480.8 L224.0 482.0 L225.7 483.2 L227.3 484.3 L229.0 485.4 L230.6 486.5 L232.3 487.6 L234.0 488.6 L235.8 489.6 L237.5 490.7 L239.2 491.6 L241.0 492.6 L242.7 493.5 L244.5 494.5 L246.3 495.3 L248.1 496.2 L249.9 497.1 L251.7 497.9 L253.6 498.7 L255.4 499.5 L257.3 500.3 L259.1 501.0 L261.0 501.8 L262.8 502.5 L264.7 503.2 L266.6 503.9 L268.4 504.6 L270.3 505.3 L272.2 506.0 L274.1 506.6 L276.0 507.2 L277.9 507.9 L279.8 508.5 L281.7 509.0 L283.6 509.6 L285.6 510.1 L287.5 510.5 L289.5 510.9 L291.5 511.2 L293.4 511.5 L295.4 511.6 L297.4 511.8 L299.4 511.9 L301.4 512.0 L303.4 512.0 L305.4 512.1 L307.4 512.1 L309.4 512.1 L311.4 512.0 L313.4 512.0 L315.4 512.1 L317.4 512.1 L319.4 512.1 L321.4 512.0 L323.4 511.9 L325.4 511.8 L327.4 511.7 L329.4 511.6 L331.4 511.4 L333.4 511.1 L335.3 510.8 L337.3 510.3 L339.2 509.9 L341.2 509.3 L343.1 508.8 L345.0 508.2 L346.9 507.6 L348.8 507.0 L350.7 506.3 L352.6 505.7 L354.5 505.0 L356.4 504.3 L358.2 503.6 L360.1 502.9 L362.0 502.2 L363.8 501.4 L365.7 500.7 L367.5 499.9 L369.4 499.1 L371.2 498.3 L373.0 497.5 L374.8 496.7 L376.6 495.8 L378.4 495.0 L380.2 494.1 L382.0 493.1 L383.8 492.2 L385.5 491.2 L387.2 490.2 L389.0 489.2 L390.7 488.2 L392.4 487.1 L394.1 486.1 L395.7 485.0 L397.4 483.8 L399.0 482.7 L400.7 481.5 L402.3 480.3 L403.9 479.1 L405.4 477.9 L407.0 476.6 L408.5 475.3 L410.0 474.0 L411.5 472.7 L412.9 471.3 L414.4 469.9 L415.8 468.5 L417.2 467.1 L418.6 465.6 L419.9 464.1 L421.2 462.6 L422.5 461.1 L423.8 459.5 L425.0 457.9 L426.2 456.3 L427.3 454.7 L428.5 453.1 L429.6 451.4 L430.8 449.8 L431.9 448.1 L433.0 446.5 L434.1 444.8 L435.2 443.1 L436.3 441.5 L437.3 439.8 L438.4 438.1 L439.4 436.3 L440.4 434.6 L441.4 432.9 L442.4 431.1 L443.4 429.4 L444.3 427.6 L445.2 425.8 L446.1 424.1 L447.0 422.3 L447.9 420.5 L448.7 418.6 L449.5 416.8 L450.3 415.0 L451.1 413.1 L451.9 411.3 L452.6 409.4 L453.4 407.6 L454.1 405.7 L454.7 403.8 L455.4 401.9 L456.0 400.0 L456.5 398.1 L457.1 396.2 L457.6 394.2 L458.1 392.3 L458.6 390.4 L459.0 388.4 L459.5 386.5 L459.9 384.5 L460.4 382.6 L460.8 380.6 L461.2 378.7 L461.7 376.7 L462.1 374.8 L462.5 372.8 L462.9 370.8 L463.3 368.9 L463.7 366.9 L464.1 365.0 L464.4 363.0 L464.8 361.0 L465.1 359.1 L465.5 357.1 L465.8 355.1 L466.2 353.1 L466.5 351.2 L466.8 349.2 L467.1 347.2 L467.3 345.2 L467.6 343.2 L467.8 341.3 L468.0 339.3 L468.2 337.3 L468.3 335.3 L468.4 333.3 L468.5 331.3 L468.6 329.3 L468.7 327.3 L468.8 325.3 L468.8 323.3 L468.9 321.3 L468.9 319.3 L469.0 317.3 L469.0 315.3 L469.0 313.3 L469.0 311.3 L469.0 309.3 L469.0 307.3 L469.0 305.3 L468.9 303.3 L468.9 301.3 L468.8 299.3 L468.6 297.3 L468.5 295.3 L468.3 293.3 L468.1 291.3 L467.8 289.3 L467.6 287.4 L467.4 285.4 L467.1 283.4 L466.8 281.4 L466.5 279.4 L466.3 277.4 L466.0 275.5 L465.7 273.5 L465.4 271.5 L465.1 269.5 L464.8 267.6 L464.5 265.6 L464.2 263.6 L463.9 261.6 L463.5 259.7 L463.2 257.7 L462.8 255.7 L462.4 253.8 L462.0 251.8 L461.6 249.8 L461.2 247.9 L460.7 245.9 L460.3 244.0 L459.8 242.1 L459.3 240.1 L458.8 238.2 L458.3 236.2 L457.8 234.3 L457.2 232.4 L456.7 230.5 L456.1 228.5 L455.5 226.6 L454.9 224.7 L454.3 222.8 L453.7 220.9 L453.1 219.0 L452.4 217.1 L451.8 215.2 L451.1 213.4 L450.4 211.5 L449.8 209.6 L449.1 207.7 L448.5 205.8 L447.8 203.9 L447.1 202.0 L446.4 200.2 L445.7 198.3 L445.0 196.4 L444.3 194.6 L443.5 192.7 L442.7 190.9 L441.8 189.1 L441.0 187.3 L440.1 185.5 L439.2 183.7 L438.3 181.9 L437.3 180.2 L436.3 178.4 L435.2 176.8 L434.1 175.1 L432.8 173.6 L431.5 172.1 L430.1 170.6 L429.4 169.9"/>
</g>
<g fill="none" stroke-width="1" clip-path="url(#cl)" stroke="#2a1838" stroke-opacity="1">
<path d="M209.4 166.0 L211.3 166.7 L213.2 167.3 L215.1 168.0 L216.9 168.7 L218.8 169.3 L220.8 169.9 L222.7 170.4 L224.6 170.9 L226.5 171.4 L228.5 171.8 L230.5 172.2 L232.4 172.5 L234.4 172.8 L236.4 173.1 L238.4 173.3 L240.4 173.5 L242.4 173.7 L244.3 173.9 L246.3 174.1 L248.3 174.2 L250.3 174.3 L252.3 174.3 L254.3 174.4 L256.3 174.4 L258.3 174.4 L260.3 174.4 L262.3 174.4 L264.3 174.4 L266.3 174.4 L268.3 174.4 L270.3 174.4 L272.3 174.4 L274.3 174.4 L276.3 174.4 L278.3 174.4 L280.3 174.4 L282.3 174.4 L284.3 174.4 L286.3 174.4 L288.3 174.4 L290.3 174.4 L292.3 174.4 L294.3 174.4 L296.3 174.4 L298.3 174.4 L300.3 174.4 L302.3 174.4 L304.3 174.4 L306.3 174.4 L308.3 174.4 L310.3 174.4 L312.3 174.4 L314.3 174.4 L316.3 174.4 L318.3 174.4 L320.3 174.4 L322.3 174.4 L324.3 174.4 L326.3 174.4 L328.3 174.4 L330.3 174.4 L332.3 174.4 L334.3 174.4 L336.3 174.4 L338.3 174.4 L340.3 174.4 L342.3 174.4 L344.3 174.4 L346.3 174.4 L348.3 174.4 L350.3 174.4 L352.3 174.4 L354.3 174.4 L356.3 174.4 L358.3 174.4 L360.3 174.4 L362.3 174.4 L364.3 174.4 L366.3 174.4 L368.3 174.4 L370.3 174.4 L372.3 174.3 L374.3 174.2 L376.3 174.1 L378.3 174.0 L380.3 173.9 L382.3 173.7 L384.3 173.5 L386.3 173.2 L388.3 173.0 L390.2 172.7 L392.2 172.4 L394.2 172.1 L396.1 171.7 L398.1 171.2 L400.0 170.8 L402.0 170.2 L403.9 169.7 L405.8 169.1 L407.7 168.4 L409.5 167.8 L411.4 167.1 L413.2 166.5 L414.6 166.0 L414.6 166.0"/>
<path d="M209.4 166.0 L211.0 167.2 L212.6 168.5 L214.1 169.7 L215.8 170.9 L217.4 172.0 L219.0 173.1 L220.7 174.1 L222.5 175.1 L224.3 175.9 L226.2 176.6 L228.1 177.1 L230.0 177.6 L231.9 178.0 L233.9 178.4 L235.9 178.7 L237.9 179.0 L239.8 179.3 L241.8 179.6 L243.8 179.8 L245.8 180.0 L247.8 180.2 L249.8 180.3 L251.8 180.4 L253.8 180.5 L255.8 180.6 L257.8 180.7 L259.8 180.7 L261.8 180.7 L263.8 180.8 L265.8 180.8 L267.8 180.8 L269.8 180.9 L271.8 180.9 L273.8 180.9 L275.8 180.9 L277.8 180.9 L279.8 180.9 L281.8 181.0 L283.8 181.0 L285.8 181.0 L287.8 181.0 L289.8 181.0 L291.8 181.0 L293.8 181.0 L295.8 181.0 L297.8 181.0 L299.8 181.1 L301.8 181.1 L303.8 181.1 L305.8 181.1 L307.8 181.1 L309.8 181.1 L311.8 181.1 L313.8 181.1 L315.8 181.1 L317.8 181.1 L319.8 181.1 L321.8 181.1 L323.8 181.1 L325.8 181.1 L327.8 181.0 L329.8 181.0 L331.8 181.0 L333.8 181.0 L335.8 181.0 L337.8 181.0 L339.8 181.0 L341.8 181.0 L343.8 180.9 L345.8 180.9 L347.8 180.9 L349.8 180.9 L351.8 180.9 L353.8 180.9 L355.8 180.8 L357.8 180.8 L359.8 180.8 L361.8 180.7 L363.8 180.7 L365.8 180.7 L367.8 180.6 L369.8 180.6 L371.8 180.5 L373.8 180.4 L375.7 180.2 L377.7 180.0 L379.7 179.8 L381.7 179.6 L383.7 179.4 L385.7 179.1 L387.7 178.8 L389.6 178.5 L391.6 178.1 L393.6 177.7 L395.5 177.2 L397.4 176.7 L399.3 176.1 L401.1 175.3 L402.8 174.4 L404.6 173.4 L406.2 172.3 L407.9 171.1 L409.5 170.0 L411.0 168.8 L412.6 167.6 L414.1 166.4 L414.6 166.0"/>
<path d="M209.4 166.0 L210.7 167.5 L212.0 169.1 L213.3 170.6 L214.7 172.0 L216.0 173.5 L217.4 174.9 L218.9 176.3 L220.4 177.6 L222.0 178.8 L223.6 179.8 L225.3 180.8 L227.2 181.6 L229.0 182.2 L230.9 182.8 L232.9 183.3 L234.8 183.7 L236.8 184.1 L238.7 184.4 L240.7 184.7 L242.7 185.0 L244.7 185.3 L246.7 185.5 L248.6 185.7 L250.6 185.9 L252.6 186.1 L254.6 186.3 L256.6 186.4 L258.6 186.5 L260.6 186.6 L262.6 186.7 L264.6 186.7 L266.6 186.8 L268.6 186.9 L270.6 186.9 L272.6 186.9 L274.6 187.0 L276.6 187.0 L278.6 187.0 L280.6 187.0 L282.6 187.1 L284.6 187.1 L286.6 187.1 L288.6 187.1 L290.6 187.1 L292.6 187.1 L294.6 187.1 L296.6 187.1 L298.6 187.2 L300.6 187.2 L302.6 187.2 L304.6 187.2 L306.6 187.2 L308.6 187.2 L310.6 187.2 L312.6 187.2 L314.6 187.2 L316.6 187.2 L318.6 187.2 L320.6 187.2 L322.6 187.2 L324.6 187.2 L326.6 187.2 L328.6 187.1 L330.6 187.1 L332.6 187.1 L334.6 187.1 L336.6 187.1 L338.6 187.1 L340.6 187.1 L342.6 187.0 L344.6 187.0 L346.6 187.0 L348.6 187.0 L350.6 187.0 L352.6 186.9 L354.6 186.9 L356.6 186.8 L358.6 186.8 L360.6 186.7 L362.6 186.6 L364.6 186.5 L366.6 186.4 L368.6 186.3 L370.6 186.2 L372.6 186.0 L374.6 185.8 L376.6 185.6 L378.5 185.4 L380.5 185.1 L382.5 184.8 L384.5 184.5 L386.5 184.2 L388.4 183.9 L390.4 183.5 L392.3 183.0 L394.2 182.5 L396.1 181.9 L398.0 181.1 L399.7 180.2 L401.4 179.2 L403.0 178.0 L404.5 176.8 L406.0 175.4 L407.4 174.0 L408.8 172.6 L410.2 171.1 L411.5 169.7 L412.8 168.2 L414.1 166.7 L414.6 166.0"/>
<path d="M209.4 166.0 L210.4 167.7 L211.4 169.5 L212.5 171.2 L213.6 172.8 L214.7 174.5 L215.9 176.1 L217.1 177.7 L218.3 179.3 L219.6 180.8 L220.9 182.3 L222.3 183.6 L223.9 184.9 L225.5 186.0 L227.2 186.9 L229.0 187.7 L230.9 188.4 L232.8 189.0 L234.7 189.5 L236.6 189.9 L238.6 190.3 L240.6 190.6 L242.6 190.9 L244.5 191.2 L246.5 191.5 L248.5 191.8 L250.5 192.0 L252.5 192.2 L254.5 192.4 L256.4 192.6 L258.4 192.8 L260.4 192.9 L262.4 193.0 L264.4 193.1 L266.4 193.2 L268.4 193.3 L270.4 193.4 L272.4 193.4 L274.4 193.5 L276.4 193.5 L278.4 193.6 L280.4 193.6 L282.4 193.7 L284.4 193.7 L286.4 193.7 L288.4 193.8 L290.4 193.8 L292.4 193.8 L294.4 193.9 L296.4 193.9 L298.4 193.9 L300.4 193.9 L302.4 194.0 L304.4 194.0 L306.4 194.0 L308.4 194.0 L310.4 194.0 L312.4 194.0 L314.4 194.0 L316.4 194.0 L318.4 194.0 L320.4 194.0 L322.4 193.9 L324.4 193.9 L326.4 193.9 L328.4 193.9 L330.4 193.9 L332.4 193.8 L334.4 193.8 L336.4 193.8 L338.4 193.7 L340.4 193.7 L342.4 193.7 L344.4 193.6 L346.4 193.6 L348.4 193.5 L350.4 193.5 L352.4 193.4 L354.4 193.3 L356.4 193.3 L358.4 193.2 L360.4 193.1 L362.4 192.9 L364.4 192.8 L366.4 192.7 L368.4 192.5 L370.4 192.4 L372.4 192.2 L374.3 191.9 L376.3 191.7 L378.3 191.4 L380.3 191.1 L382.3 190.8 L384.2 190.5 L386.2 190.1 L388.2 189.7 L390.1 189.3 L392.0 188.8 L393.9 188.2 L395.8 187.4 L397.5 186.6 L399.2 185.5 L400.8 184.4 L402.3 183.1 L403.7 181.7 L405.0 180.2 L406.2 178.6 L407.4 177.0 L408.6 175.4 L409.8 173.8 L410.9 172.1 L412.0 170.5 L413.0 168.8 L414.0 167.0 L414.5 166.2"/>
<path d="M209.4 166.0 L210.0 167.9 L210.7 169.8 L211.4 171.6 L212.2 173.5 L213.1 175.2 L214.1 177.0 L215.2 178.6 L216.3 180.3 L217.5 181.9 L218.8 183.4 L220.1 184.9 L221.5 186.3 L223.0 187.6 L224.5 188.9 L226.2 190.0 L227.9 191.0 L229.7 191.9 L231.5 192.7 L233.3 193.5 L235.1 194.3 L237.0 195.0 L238.9 195.6 L240.8 196.2 L242.7 196.8 L244.7 197.3 L246.6 197.7 L248.6 198.1 L250.5 198.4 L252.5 198.7 L254.5 199.0 L256.5 199.3 L258.5 199.6 L260.4 199.8 L262.4 200.1 L264.4 200.3 L266.4 200.5 L268.4 200.8 L270.4 201.0 L272.4 201.3 L274.3 201.5 L276.3 201.7 L278.3 201.9 L280.3 202.1 L282.3 202.3 L284.3 202.5 L286.3 202.7 L288.3 202.8 L290.3 203.0 L292.3 203.1 L294.3 203.3 L296.2 203.4 L298.2 203.5 L300.2 203.6 L302.2 203.7 L304.2 203.8 L306.2 203.9 L308.2 203.9 L310.2 203.9 L312.2 204.0 L314.2 203.9 L316.2 203.9 L318.2 203.9 L320.2 203.8 L322.2 203.7 L324.2 203.6 L326.2 203.5 L328.2 203.4 L330.2 203.3 L332.2 203.1 L334.2 203.0 L336.2 202.8 L338.2 202.6 L340.2 202.5 L342.2 202.3 L344.2 202.1 L346.2 201.9 L348.1 201.7 L350.1 201.4 L352.1 201.2 L354.1 201.0 L356.1 200.7 L358.1 200.5 L360.1 200.2 L362.0 200.0 L364.0 199.7 L366.0 199.5 L368.0 199.2 L370.0 199.0 L372.0 198.7 L373.9 198.3 L375.9 198.0 L377.9 197.6 L379.8 197.2 L381.7 196.7 L383.7 196.1 L385.6 195.5 L387.4 194.8 L389.3 194.1 L391.1 193.4 L393.0 192.6 L394.8 191.7 L396.5 190.7 L398.2 189.7 L399.8 188.6 L401.4 187.3 L402.8 186.0 L404.2 184.6 L405.5 183.1 L406.8 181.5 L407.9 179.9 L409.1 178.2 L410.1 176.6 L411.1 174.8 L411.9 173.0 L412.7 171.2 L413.5 169.4 L414.1 167.5 L414.6 166.0 L414.6 166.0"/>
<path d="M209.4 166.0 L209.7 168.0 L210.0 169.9 L210.4 171.9 L210.9 173.9 L211.4 175.8 L211.9 177.7 L212.5 179.6 L213.1 181.5 L213.8 183.4 L214.5 185.2 L215.3 187.0 L216.3 188.7 L217.4 190.3 L218.8 191.7 L220.2 193.1 L221.7 194.3 L223.3 195.5 L225.0 196.7 L226.6 197.8 L228.3 198.9 L230.0 199.9 L231.7 201.0 L233.4 202.0 L235.2 203.0 L236.9 203.9 L238.7 204.8 L240.6 205.6 L242.4 206.3 L244.3 207.0 L246.2 207.6 L248.1 208.2 L250.0 208.7 L252.0 209.2 L253.9 209.7 L255.8 210.1 L257.8 210.5 L259.8 210.8 L261.8 211.1 L263.7 211.4 L265.7 211.7 L267.7 211.9 L269.7 212.2 L271.7 212.4 L273.7 212.7 L275.6 212.9 L277.6 213.2 L279.6 213.4 L281.6 213.6 L283.6 213.9 L285.6 214.1 L287.6 214.2 L289.6 214.4 L291.5 214.6 L293.5 214.7 L295.5 214.8 L297.5 214.9 L299.5 215.0 L301.5 215.1 L303.5 215.2 L305.5 215.2 L307.5 215.2 L309.5 215.3 L311.5 215.3 L313.5 215.3 L315.5 215.3 L317.5 215.2 L319.5 215.2 L321.5 215.1 L323.5 215.1 L325.5 215.0 L327.5 214.9 L329.5 214.8 L331.5 214.6 L333.5 214.5 L335.5 214.3 L337.5 214.1 L339.5 214.0 L341.5 213.7 L343.5 213.5 L345.4 213.3 L347.4 213.0 L349.4 212.8 L351.4 212.6 L353.4 212.3 L355.4 212.0 L357.4 211.8 L359.3 211.5 L361.3 211.3 L363.3 211.0 L365.3 210.7 L367.2 210.3 L369.2 209.9 L371.1 209.5 L373.1 209.0 L375.0 208.4 L376.9 207.9 L378.8 207.3 L380.7 206.6 L382.6 205.9 L384.4 205.1 L386.2 204.3 L388.0 203.4 L389.8 202.5 L391.5 201.5 L393.2 200.4 L394.9 199.4 L396.6 198.3 L398.2 197.2 L399.9 196.0 L401.5 194.9 L403.1 193.7 L404.6 192.4 L406.0 191.0 L407.2 189.5 L408.2 187.8 L409.1 186.1 L409.9 184.3 L410.6 182.4 L411.2 180.5 L411.8 178.6 L412.4 176.7 L412.9 174.8 L413.4 172.8 L413.8 170.9 L414.1 168.9 L414.5 166.9 L414.6 166.0"/>
<path d="M209.4 166.0 L209.1 168.0 L208.8 170.0 L208.5 171.9 L208.2 173.9 L207.9 175.9 L207.6 177.9 L207.4 179.8 L207.3 181.8 L207.2 183.8 L207.3 185.8 L207.6 187.7 L208.1 189.6 L208.7 191.5 L209.4 193.3 L210.3 195.1 L211.3 196.9 L212.4 198.5 L213.5 200.1 L214.8 201.7 L216.1 203.1 L217.5 204.5 L219.0 205.9 L220.5 207.2 L222.0 208.5 L223.6 209.7 L225.2 210.9 L226.8 212.1 L228.5 213.2 L230.2 214.3 L231.9 215.3 L233.6 216.3 L235.4 217.2 L237.2 218.2 L239.0 219.0 L240.8 219.9 L242.6 220.7 L244.5 221.4 L246.3 222.1 L248.2 222.8 L250.1 223.3 L252.1 223.9 L254.0 224.4 L255.9 224.8 L257.9 225.1 L259.9 225.5 L261.9 225.8 L263.8 226.1 L265.8 226.4 L267.8 226.7 L269.8 227.0 L271.7 227.3 L273.7 227.6 L275.7 228.0 L277.7 228.3 L279.6 228.6 L281.6 228.9 L283.6 229.1 L285.6 229.4 L287.6 229.7 L289.5 229.9 L291.5 230.1 L293.5 230.3 L295.5 230.5 L297.5 230.7 L299.5 230.9 L301.5 231.0 L303.5 231.1 L305.5 231.2 L307.5 231.3 L309.5 231.3 L311.5 231.3 L313.5 231.3 L315.5 231.3 L317.5 231.2 L319.5 231.2 L321.5 231.1 L323.5 230.9 L325.5 230.8 L327.5 230.6 L329.4 230.4 L331.4 230.2 L333.4 230.0 L335.4 229.8 L337.4 229.5 L339.4 229.3 L341.4 229.0 L343.3 228.7 L345.3 228.4 L347.3 228.1 L349.3 227.8 L351.2 227.5 L353.2 227.2 L355.2 226.9 L357.2 226.6 L359.1 226.2 L361.1 225.9 L363.1 225.6 L365.1 225.3 L367.0 225.0 L369.0 224.6 L370.9 224.1 L372.9 223.6 L374.8 223.1 L376.7 222.5 L378.6 221.8 L380.4 221.1 L382.3 220.3 L384.1 219.5 L385.9 218.6 L387.7 217.7 L389.5 216.8 L391.2 215.8 L392.9 214.8 L394.6 213.7 L396.3 212.7 L397.9 211.5 L399.6 210.3 L401.1 209.1 L402.7 207.9 L404.2 206.6 L405.7 205.2 L407.1 203.9 L408.5 202.4 L409.8 200.9 L411.0 199.3 L412.2 197.7 L413.2 196.0 L414.1 194.3 L414.9 192.5 L415.6 190.6 L416.2 188.7 L416.5 186.8 L416.7 184.8 L416.8 182.8 L416.7 180.9 L416.5 178.9 L416.2 176.9 L416.0 174.9 L415.7 172.9 L415.4 171.0 L415.1 169.0 L414.8 167.0 L414.6 166.0"/>
<path d="M209.4 166.0 L208.3 167.7 L207.2 169.3 L206.2 171.1 L205.3 172.9 L204.6 174.7 L203.9 176.5 L203.3 178.4 L202.8 180.4 L202.5 182.3 L202.2 184.3 L202.1 186.3 L202.1 188.3 L202.1 190.3 L202.3 192.2 L202.6 194.2 L202.9 196.2 L203.3 198.1 L203.9 200.1 L204.5 201.9 L205.2 203.8 L205.9 205.7 L206.8 207.5 L207.7 209.2 L208.7 211.0 L209.7 212.7 L210.8 214.4 L211.9 216.0 L213.1 217.6 L214.3 219.2 L215.6 220.8 L216.9 222.3 L218.2 223.8 L219.6 225.2 L221.0 226.6 L222.5 227.9 L224.0 229.2 L225.6 230.5 L227.2 231.7 L228.8 232.9 L230.4 234.0 L232.1 235.1 L233.7 236.2 L235.4 237.3 L237.1 238.3 L238.9 239.3 L240.6 240.3 L242.4 241.3 L244.1 242.2 L245.9 243.1 L247.7 243.9 L249.5 244.8 L251.4 245.6 L253.2 246.4 L255.0 247.2 L256.9 247.9 L258.8 248.7 L260.6 249.4 L262.5 250.2 L264.3 250.9 L266.2 251.6 L268.1 252.3 L269.9 253.0 L271.8 253.7 L273.7 254.3 L275.6 254.9 L277.5 255.5 L279.5 256.1 L281.4 256.6 L283.3 257.1 L285.3 257.5 L287.2 258.0 L289.2 258.4 L291.1 258.8 L293.1 259.1 L295.1 259.5 L297.0 259.8 L299.0 260.1 L301.0 260.4 L303.0 260.6 L305.0 260.7 L307.0 260.8 L309.0 260.9 L311.0 261.0 L313.0 261.0 L315.0 260.9 L317.0 260.9 L319.0 260.7 L321.0 260.6 L322.9 260.4 L324.9 260.1 L326.9 259.8 L328.9 259.5 L330.8 259.1 L332.8 258.8 L334.8 258.4 L336.7 258.0 L338.7 257.5 L340.6 257.1 L342.6 256.6 L344.5 256.1 L346.4 255.5 L348.3 255.0 L350.2 254.3 L352.1 253.7 L354.0 253.0 L355.9 252.3 L357.7 251.6 L359.6 250.9 L361.5 250.2 L363.3 249.4 L365.2 248.7 L367.0 248.0 L368.9 247.2 L370.7 246.4 L372.6 245.6 L374.4 244.8 L376.2 244.0 L378.0 243.1 L379.8 242.2 L381.6 241.3 L383.3 240.3 L385.1 239.4 L386.8 238.3 L388.5 237.3 L390.2 236.2 L391.9 235.2 L393.5 234.0 L395.2 232.9 L396.8 231.7 L398.4 230.5 L399.9 229.2 L401.5 227.9 L402.9 226.6 L404.4 225.2 L405.8 223.8 L407.1 222.3 L408.4 220.8 L409.7 219.2 L410.9 217.7 L412.0 216.0 L413.2 214.4 L414.3 212.7 L415.3 211.0 L416.3 209.3 L417.2 207.5 L418.0 205.7 L418.8 203.9 L419.5 202.0 L420.1 200.1 L420.6 198.2 L421.1 196.2 L421.4 194.3 L421.7 192.3 L421.9 190.3 L421.9 188.3 L421.9 186.3 L421.8 184.4 L421.5 182.4 L421.2 180.4 L420.7 178.5 L420.1 176.6 L419.5 174.7 L418.7 172.9 L417.8 171.1 L416.8 169.4 L415.8 167.7 L414.6 166.0 L414.6 166.0"/>
<path d="M209.4 166.0 L207.6 166.8 L205.9 167.9 L204.4 169.2 L203.0 170.6 L201.7 172.0 L200.5 173.6 L199.5 175.3 L198.6 177.0 L197.7 178.9 L197.0 180.7 L196.4 182.6 L195.8 184.5 L195.3 186.4 L194.9 188.4 L194.5 190.4 L194.2 192.3 L194.0 194.3 L193.8 196.3 L193.7 198.3 L193.7 200.3 L193.7 202.3 L193.8 204.3 L194.0 206.3 L194.2 208.2 L194.5 210.2 L194.8 212.2 L195.2 214.2 L195.6 216.1 L196.1 218.1 L196.6 220.0 L197.1 221.9 L197.7 223.8 L198.4 225.7 L199.1 227.6 L199.8 229.4 L200.6 231.3 L201.4 233.1 L202.2 234.9 L203.1 236.7 L203.9 238.5 L204.8 240.4 L205.6 242.2 L206.5 244.0 L207.3 245.8 L208.2 247.6 L209.1 249.4 L210.0 251.1 L210.9 252.9 L211.9 254.7 L212.9 256.4 L213.9 258.1 L215.0 259.8 L216.1 261.5 L217.2 263.2 L218.3 264.8 L219.4 266.5 L220.6 268.1 L221.8 269.7 L223.0 271.2 L224.3 272.8 L225.6 274.3 L227.0 275.8 L228.4 277.2 L229.8 278.6 L231.2 280.0 L232.7 281.4 L234.1 282.7 L235.6 284.1 L237.1 285.4 L238.6 286.8 L240.1 288.1 L241.6 289.4 L243.1 290.7 L244.6 292.0 L246.1 293.3 L247.7 294.5 L249.3 295.8 L250.9 297.0 L252.5 298.2 L254.1 299.3 L255.8 300.5 L257.4 301.5 L259.1 302.6 L260.8 303.6 L262.6 304.6 L264.3 305.6 L266.1 306.6 L267.8 307.5 L269.6 308.4 L271.4 309.3 L273.2 310.1 L275.0 311.0 L276.9 311.7 L278.7 312.5 L280.6 313.2 L282.5 313.8 L284.4 314.4 L286.4 314.9 L288.3 315.3 L290.2 315.7 L292.2 316.1 L294.2 316.5 L296.1 316.8 L298.1 317.1 L300.1 317.3 L302.1 317.6 L304.1 317.7 L306.1 317.9 L308.1 318.0 L310.1 318.1 L312.1 318.1 L314.1 318.1 L316.1 318.0 L318.1 317.9 L320.1 317.7 L322.0 317.5 L324.0 317.3 L326.0 317.1 L328.0 316.8 L330.0 316.5 L331.9 316.1 L333.9 315.7 L335.8 315.3 L337.8 314.8 L339.7 314.3 L341.6 313.7 L343.5 313.1 L345.4 312.4 L347.3 311.7 L349.1 310.9 L350.9 310.1 L352.7 309.2 L354.5 308.3 L356.3 307.4 L358.1 306.5 L359.8 305.6 L361.6 304.6 L363.3 303.6 L365.0 302.5 L366.7 301.5 L368.4 300.4 L370.0 299.2 L371.6 298.1 L373.3 296.9 L374.8 295.7 L376.4 294.5 L378.0 293.2 L379.5 291.9 L381.0 290.6 L382.6 289.3 L384.1 288.0 L385.5 286.7 L387.0 285.3 L388.5 284.0 L390.0 282.6 L391.5 281.3 L392.9 279.9 L394.3 278.5 L395.7 277.1 L397.1 275.6 L398.5 274.2 L399.8 272.7 L401.1 271.1 L402.3 269.6 L403.5 268.0 L404.7 266.3 L405.8 264.7 L406.9 263.0 L408.0 261.4 L409.1 259.7 L410.1 258.0 L411.1 256.3 L412.1 254.5 L413.1 252.8 L414.1 251.0 L415.0 249.2 L415.9 247.4 L416.7 245.6 L417.6 243.8 L418.4 242.0 L419.3 240.2 L420.2 238.4 L421.0 236.6 L421.8 234.8 L422.7 233.0 L423.5 231.1 L424.2 229.3 L425.0 227.4 L425.7 225.6 L426.3 223.7 L426.9 221.8 L427.5 219.8 L428.0 217.9 L428.4 216.0 L428.9 214.0 L429.2 212.1 L429.6 210.1 L429.8 208.1 L430.1 206.1 L430.2 204.1 L430.3 202.1 L430.3 200.1 L430.3 198.1 L430.2 196.2 L430.0 194.2 L429.8 192.2 L429.5 190.2 L429.1 188.3 L428.7 186.3 L428.2 184.4 L427.6 182.5 L426.9 180.6 L426.2 178.7 L425.4 176.9 L424.5 175.2 L423.4 173.5 L422.2 171.9 L420.9 170.5 L419.5 169.1 L418.0 167.9 L416.3 166.8 L414.6 166.0 L414.6 166.0"/>
<path d="M194.7 169.8 L193.3 171.2 L192.0 172.7 L190.7 174.2 L189.4 175.8 L188.3 177.5 L187.3 179.2 L186.3 180.9 L185.3 182.7 L184.4 184.4 L183.5 186.2 L182.6 188.0 L181.8 189.8 L181.0 191.7 L180.2 193.5 L179.4 195.3 L178.7 197.2 L178.0 199.1 L177.3 200.9 L176.6 202.8 L175.9 204.7 L175.3 206.6 L174.6 208.5 L173.9 210.4 L173.3 212.3 L172.6 214.1 L172.0 216.0 L171.3 217.9 L170.7 219.8 L170.0 221.7 L169.4 223.6 L168.8 225.5 L168.2 227.4 L167.6 229.4 L167.1 231.3 L166.5 233.2 L166.0 235.1 L165.5 237.1 L165.0 239.0 L164.5 240.9 L164.0 242.9 L163.5 244.8 L163.1 246.8 L162.6 248.7 L162.2 250.7 L161.8 252.6 L161.4 254.6 L161.0 256.5 L160.7 258.5 L160.3 260.5 L160.0 262.5 L159.7 264.4 L159.4 266.4 L159.1 268.4 L158.8 270.4 L158.5 272.3 L158.2 274.3 L157.9 276.3 L157.6 278.3 L157.3 280.3 L157.1 282.2 L156.8 284.2 L156.5 286.2 L156.3 288.2 L156.1 290.2 L155.8 292.2 L155.6 294.2 L155.5 296.1 L155.3 298.1 L155.2 300.1 L155.1 302.1 L155.0 304.1 L155.0 306.1 L155.0 308.1 L155.0 310.1 L155.0 312.1 L155.0 314.1 L155.0 316.1 L155.1 318.1 L155.1 320.1 L155.1 322.1 L155.2 324.1 L155.2 326.1 L155.3 328.1 L155.4 330.1 L155.5 332.1 L155.6 334.1 L155.7 336.1 L155.9 338.1 L156.1 340.1 L156.3 342.1 L156.5 344.1 L156.8 346.1 L157.1 348.0 L157.4 350.0 L157.7 352.0 L158.0 354.0 L158.3 355.9 L158.7 357.9 L159.0 359.9 L159.3 361.9 L159.7 363.8 L160.1 365.8 L160.5 367.7 L160.9 369.7 L161.3 371.7 L161.7 373.6 L162.1 375.6 L162.5 377.5 L162.9 379.5 L163.4 381.4 L163.8 383.4 L164.3 385.3 L164.7 387.3 L165.2 389.2 L165.6 391.2 L166.1 393.1 L166.6 395.1 L167.1 397.0 L167.7 398.9 L168.3 400.8 L168.9 402.7 L169.5 404.6 L170.2 406.5 L170.9 408.4 L171.7 410.2 L172.4 412.1 L173.2 413.9 L174.0 415.8 L174.8 417.6 L175.6 419.4 L176.5 421.2 L177.4 423.0 L178.2 424.8 L179.2 426.6 L180.1 428.4 L181.0 430.1 L182.0 431.9 L183.0 433.6 L184.0 435.3 L185.0 437.1 L186.0 438.8 L187.1 440.5 L188.2 442.2 L189.3 443.8 L190.4 445.5 L191.5 447.2 L192.6 448.8 L193.7 450.5 L194.9 452.1 L196.0 453.8 L197.2 455.4 L198.3 457.0 L199.5 458.6 L200.8 460.2 L202.0 461.7 L203.3 463.3 L204.6 464.8 L206.0 466.2 L207.4 467.7 L208.8 469.1 L210.2 470.5 L211.7 471.9 L213.1 473.2 L214.6 474.6 L216.1 475.9 L217.7 477.1 L219.2 478.4 L220.8 479.6 L222.4 480.8 L224.0 482.0 L225.7 483.2 L227.3 484.3 L229.0 485.4 L230.6 486.5 L232.3 487.6 L234.0 488.6 L235.8 489.6 L237.5 490.7 L239.2 491.6 L241.0 492.6 L242.7 493.5 L244.5 494.5 L246.3 495.3 L248.1 496.2 L249.9 497.1 L251.7 497.9 L253.6 498.7 L255.4 499.5 L257.3 500.3 L259.1 501.0 L261.0 501.8 L262.8 502.5 L264.7 503.2 L266.6 503.9 L268.4 504.6 L270.3 505.3 L272.2 506.0 L274.1 506.6 L276.0 507.2 L277.9 507.9 L279.8 508.5 L281.7 509.0 L283.6 509.6 L285.6 510.1 L287.5 510.5 L289.5 510.9 L291.5 511.2 L293.4 511.5 L295.4 511.6 L297.4 511.8 L299.4 511.9 L301.4 512.0 L303.4 512.0 L305.4 512.1 L307.4 512.1 L309.4 512.1 L311.4 512.0 L313.4 512.0 L315.4 512.1 L317.4 512.1 L319.4 512.1 L321.4 512.0 L323.4 511.9 L325.4 511.8 L327.4 511.7 L329.4 511.6 L331.4 511.4 L333.4 511.1 L335.3 510.8 L337.3 510.3 L339.2 509.9 L341.2 509.3 L343.1 508.8 L345.0 508.2 L346.9 507.6 L348.8 507.0 L350.7 506.3 L352.6 505.7 L354.5 505.0 L356.4 504.3 L358.2 503.6 L360.1 502.9 L362.0 502.2 L363.8 501.4 L365.7 500.7 L367.5 499.9 L369.4 499.1 L371.2 498.3 L373.0 497.5 L374.8 496.7 L376.6 495.8 L378.4 495.0 L380.2 494.1 L382.0 493.1 L383.8 492.2 L385.5 491.2 L387.2 490.2 L389.0 489.2 L390.7 488.2 L392.4 487.1 L394.1 486.1 L395.7 485.0 L397.4 483.8 L399.0 482.7 L400.7 481.5 L402.3 480.3 L403.9 479.1 L405.4 477.9 L407.0 476.6 L408.5 475.3 L410.0 474.0 L411.5 472.7 L412.9 471.3 L414.4 469.9 L415.8 468.5 L417.2 467.1 L418.6 465.6 L419.9 464.1 L421.2 462.6 L422.5 461.1 L423.8 459.5 L425.0 457.9 L426.2 456.3 L427.3 454.7 L428.5 453.1 L429.6 451.4 L430.8 449.8 L431.9 448.1 L433.0 446.5 L434.1 444.8 L435.2 443.1 L436.3 441.5 L437.3 439.8 L438.4 438.1 L439.4 436.3 L440.4 434.6 L441.4 432.9 L442.4 431.1 L443.4 429.4 L444.3 427.6 L445.2 425.8 L446.1 424.1 L447.0 422.3 L447.9 420.5 L448.7 418.6 L449.5 416.8 L450.3 415.0 L451.1 413.1 L451.9 411.3 L452.6 409.4 L453.4 407.6 L454.1 405.7 L454.7 403.8 L455.4 401.9 L456.0 400.0 L456.5 398.1 L457.1 396.2 L457.6 394.2 L458.1 392.3 L458.6 390.4 L459.0 388.4 L459.5 386.5 L459.9 384.5 L460.4 382.6 L460.8 380.6 L461.2 378.7 L461.7 376.7 L462.1 374.8 L462.5 372.8 L462.9 370.8 L463.3 368.9 L463.7 366.9 L464.1 365.0 L464.4 363.0 L464.8 361.0 L465.1 359.1 L465.5 357.1 L465.8 355.1 L466.2 353.1 L466.5 351.2 L466.8 349.2 L467.1 347.2 L467.3 345.2 L467.6 343.2 L467.8 341.3 L468.0 339.3 L468.2 337.3 L468.3 335.3 L468.4 333.3 L468.5 331.3 L468.6 329.3 L468.7 327.3 L468.8 325.3 L468.8 323.3 L468.9 321.3 L468.9 319.3 L469.0 317.3 L469.0 315.3 L469.0 313.3 L469.0 311.3 L469.0 309.3 L469.0 307.3 L469.0 305.3 L468.9 303.3 L468.9 301.3 L468.8 299.3 L468.6 297.3 L468.5 295.3 L468.3 293.3 L468.1 291.3 L467.8 289.3 L467.6 287.4 L467.4 285.4 L467.1 283.4 L466.8 281.4 L466.5 279.4 L466.3 277.4 L466.0 275.5 L465.7 273.5 L465.4 271.5 L465.1 269.5 L464.8 267.6 L464.5 265.6 L464.2 263.6 L463.9 261.6 L463.5 259.7 L463.2 257.7 L462.8 255.7 L462.4 253.8 L462.0 251.8 L461.6 249.8 L461.2 247.9 L460.7 245.9 L460.3 244.0 L459.8 242.1 L459.3 240.1 L458.8 238.2 L458.3 236.2 L457.8 234.3 L457.2 232.4 L456.7 230.5 L456.1 228.5 L455.5 226.6 L454.9 224.7 L454.3 222.8 L453.7 220.9 L453.1 219.0 L452.4 217.1 L451.8 215.2 L451.1 213.4 L450.4 211.5 L449.8 209.6 L449.1 207.7 L448.5 205.8 L447.8 203.9 L447.1 202.0 L446.4 200.2 L445.7 198.3 L445.0 196.4 L444.3 194.6 L443.5 192.7 L442.7 190.9 L441.8 189.1 L441.0 187.3 L440.1 185.5 L439.2 183.7 L438.3 181.9 L437.3 180.2 L436.3 178.4 L435.2 176.8 L434.1 175.1 L432.8 173.6 L431.5 172.1 L430.1 170.6 L429.4 169.9"/>
</g>
<g fill="#d02838" fill-opacity="0.75"><ellipse cx="209.6" cy="166.5" rx="2" ry="2.2"/><ellipse cx="414.4" cy="166.5" rx="2" ry="2.2"/></g>
<g font-family="Liberation Serif" font-size="7.5px" fill="#3a1006" stroke="#3a1006" stroke-width="0.2">
<text x="309.8" y="181.5">0,67</text>
<text x="315.7" y="187.8">0,60</text>
<text x="307.3" y="194.0">0,53</text>
<text x="307.3" y="201.0">0,46</text>
<text x="307.3" y="210.5">0,39</text>
<text x="307.3" y="221.5">0,32</text>
<text x="318.6" y="238.5">0,25</text>
<text x="306.7" y="267.4">0,18</text>
<text x="318.6" y="325.7">0,11</text>
<text x="318.5" y="520.0">0,04</text>
<text x="310.3" y="159.8" font-size="7px" fill="#000" stroke="#000" stroke-width="0.2">2</text>
</g></svg>
<div id="dock" class="a"></div><div id="dockc1" class="a"></div><div id="dockc2" class="a"></div>
<div class="a" style="left:736px;top:77px;width:26px;height:333px;border-radius:2px;background:linear-gradient(#ebe9f2 0%,#e4e2ee 30%,#c4c4d6 55%,#aeaec4 80%,#a4a4bc 100%)"></div>
<div class="a" style="left:739px;top:81.5px;width:20px;height:1px;border-top:1px dotted #a0a0b0"></div>
<div class="a" style="left:764px;top:76.5px;width:29px;height:97px;border-radius:2px;background:linear-gradient(#e6e6f0 0%,#d8d8e6 40%,#b8b8cc 80%,#a8a8be 100%)"></div>
<div class="a" style="left:767px;top:80.5px;width:23px;height:1px;border-top:1px dotted #a0a0b0"></div>
<!-- separators -->
<div class="a" style="left:740px;top:133px;width:17px;height:1px;background:#d0d0dc"></div>
<div class="a" style="left:740px;top:251px;width:17px;height:1px;background:#f0f0f8"></div>
<div class="a" style="left:740px;top:302px;width:17px;height:1px;background:#e0e0ec"></div>
<div class="a" style="left:740px;top:353px;width:17px;height:1px;background:#d8d8e4"></div>
<!-- icon1 -->
<svg class="a" style="left:741px;top:87px" width="17" height="17"><path d="M0.5 1V16H16" fill="none" stroke="#7a7a90"/><rect x="3" y="1" width="4.5" height="5" fill="#2020c0"/><rect x="3" y="10" width="4.5" height="5" fill="#c03030"/><rect x="11" y="1" width="4.5" height="4" fill="#905050"/><rect x="11" y="6" width="4.5" height="3" fill="#a04040"/><rect x="11" y="11" width="4.5" height="4" fill="#402020"/></svg>
<!-- icon2 -->
<svg class="a" style="left:741px;top:109px" width="17" height="19"><rect x="0" y="0" width="17" height="4" fill="#bff4f0"/><rect x="0" y="4" width="17" height="4" fill="#0a7a1a"/><rect x="0" y="8" width="17" height="4" fill="#2a9a2a"/><rect x="0" y="12" width="17" height="5" fill="#1a7a7a"/></svg>
<!-- icon3 -->
<svg class="a" style="left:740px;top:140px" width="18" height="16"><rect x="2" y="0" width="14" height="3" fill="#b8f0e8"/><rect x="0" y="3" width="17" height="1.2" fill="#102010"/><path d="M1 4H16V8L13 10L10 8L7 10L4 8L1 10Z" fill="#3ab030"/><path d="M1 10L4 8L7 10L10 8L13 10L16 8V15H1Z" fill="#d88a8a"/><path d="M1 9.5L4 7.5L7 9.5L10 7.5L13 9.5L16 7.5" stroke="#f0e060" fill="none" stroke-width="0.8"/></svg>
<!-- icon4 -->
<svg class="a" style="left:740px;top:162px" width="18" height="16"><rect x="2" y="0" width="14" height="2.5" fill="#b8f0e8"/><rect x="0" y="2.5" width="17" height="1.2" fill="#102010"/><rect x="1" y="3.7" width="15" height="11" fill="#d08888"/><path d="M4 3.7H13V9L5 7Z" fill="#28c028"/><path d="M4 6L5 7L13 9" stroke="#f0e080" fill="none" stroke-width="0.8"/></svg>
<!-- icon5 -->
<svg class="a" style="left:740px;top:184px" width="18" height="17"><rect x="0" y="1" width="11" height="15" fill="#7acc7a"/><path d="M0 4L11 15M0 9L6 15M0 14L11 3M5 1L11 7" stroke="#a8e0a8" stroke-width="0.8"/><rect x="0" y="1" width="11" height="2" fill="#2a7a3a"/><path d="M11 4H17L14 16Z" fill="#f08820"/><path d="M12 7H16M12.5 10H15.5M13 13H15" stroke="#b05000" stroke-width="0.8"/></svg>
<!-- icon6 -->
<svg class="a" style="left:740px;top:205px" width="18" height="16"><rect x="2" y="0" width="14" height="3" fill="#b0f0f0"/><rect x="0" y="3.5" width="17" height="1.2" fill="#203020"/><rect x="1" y="4.7" width="15" height="4" fill="#5ab05a"/><path d="M2 9.5H16Q14 15 9 15Q4 15 2 9.5Z" fill="#f08a20"/><path d="M4 11V14M7 11V15M10 11V15M13 11V14" stroke="#c05a00" stroke-width="0.7"/></svg>
<!-- icon7 selected -->
<div class="a" style="left:738px;top:224px;width:22px;height:22.5px;border:1px solid #8a6a4a;background:#f8c890"></div>
<svg class="a" style="left:740px;top:227px" width="18" height="18"><rect x="5" y="1" width="8" height="3" fill="#b0d8a0"/><rect x="0" y="3" width="18" height="1.3" fill="#202010"/><path d="M5 4.3H13V8Q16 11 14 14.5Q12 17.5 9 17.5Q6 17.5 4 14.5Q2 11 5 8Z" fill="#1a40c0"/><path d="M5.5 4.3H12.5V8Q14.5 10 13.5 12H4.5Q3.5 10 5.5 8Z" fill="#20a060"/><path d="M6 4.3H12V7H6Z" fill="#e0d040"/><path d="M6.5 4.3H11.5V5.5H6.5Z" fill="#d04020"/></svg>
<!-- icon8 -->
<svg class="a" style="left:743px;top:256px" width="14" height="17"><path d="M6 1.5H11.5V15.5H6" fill="none" stroke="#4020a0" stroke-width="2.2"/><path d="M8 12L4.5 15.5L8 18" fill="#4020a0"/><path d="M2 5L4 8L6 5M4 8V12" stroke="#d03030" stroke-width="1.2" fill="none"/></svg>
<!-- icon9 grid -->
<svg class="a" style="left:741px;top:280px" width="16" height="16"><rect x="0.5" y="0.5" width="15" height="15" fill="#b4b4c8"/><path d="M1 3.5H15M1 6.5H15M1 9.5H15M1 12.5H15M4.5 1V15M8 1V15M11.5 1V15" stroke="#f4f4fa" stroke-width="1"/></svg>
<!-- icon10 -->
<svg class="a" style="left:740px;top:305px" width="18" height="20"><path d="M1 2Q9 9 17 2Q9 6 1 2Z" fill="#60d0c8"/><path d="M1 2Q9 9 17 2" stroke="#a02020" stroke-width="1.3" fill="none"/><rect x="0.5" y="10" width="11" height="9" fill="#fff"/><text x="0.5" y="18.5" font-size="10" font-weight="bold" fill="#1a1aa0" font-family="Liberation Sans">W</text></svg>
<!-- icon11 FDD disabled -->
<div class="txt" style="left:741.5px;top:330px;font-size:6.5px;font-weight:bold;font-style:italic;color:#e8e8f0">FDD</div>
<svg class="a" style="left:741px;top:339px" width="16" height="7"><path d="M1 4Q5 5 8 5L15 1" stroke="#ececf4" stroke-width="1.2" fill="none"/></svg>
<!-- icon12 disabled grid -->
<svg class="a" style="left:742px;top:359px" width="16" height="18"><rect x="0.5" y="0.5" width="14" height="16" fill="none" stroke="#e8e8f0"/><path d="M2 4H13M2 8H13M2 12H13M4 2V15M8 2V15M11 2V15" stroke="#dcdce8" stroke-width="0.9" stroke-dasharray="1.5 1"/></svg>
<!-- icon13 disabled -->
<div class="txt" style="left:741.5px;top:383px;font-size:6px;font-weight:bold;color:#e4e4ec;letter-spacing:-0.2px">NNNC</div>
<svg class="a" style="left:741px;top:391px" width="16" height="7"><path d="M1 4Q5 5 8 5L15 1" stroke="#ececf4" stroke-width="1.2" fill="none"/></svg>
<svg class="a" style="left:753px;top:402px" width="7" height="6"><rect x="0.5" y="0.5" width="1.5" height="5" fill="#202020"/><path d="M3 0.5L6.5 3L3 5.5Z" fill="#202020"/></svg>
<!-- toolbar 2 icons -->
<div class="a" style="left:766px;top:83px;width:26px;height:27px;border:1px solid #8a6a4a;background:#f8c890"></div>
<svg class="a" style="left:768px;top:85px" width="22" height="23"><rect x="0" y="0" width="22" height="9" fill="#9ef0ee"/><rect x="0" y="9" width="22" height="5" fill="#8a7a00"/><rect x="0" y="14" width="22" height="4" fill="#7a1010"/><rect x="0" y="18" width="22" height="5" fill="#8a7a00"/><path d="M4.5 2H7.5V6.5H10.5V9H1.5V6.5H4.5Z" fill="#f0f0f0" stroke="#303030" stroke-width="0.9"/><path d="M14.5 2H17.5V6.5H20.5V9H11.5V6.5H14.5Z" fill="#f0f0f0" stroke="#303030" stroke-width="0.9"/></svg>
<svg class="a" style="left:767.5px;top:114px" width="23" height="22"><rect x="0" y="0" width="23" height="4" fill="#9ef0ee"/><rect x="0" y="4" width="23" height="8" fill="#0a7a1a"/><rect x="0" y="12" width="23" height="3.5" fill="#7a1010"/><rect x="0" y="15.5" width="23" height="6.5" fill="#1a8a2a"/><rect x="9" y="2.5" width="5" height="18" rx="1" fill="#d8d8d8" stroke="#202020" stroke-width="0.9"/></svg>
<svg class="a" style="left:767.5px;top:141px" width="23" height="22"><rect x="0" y="0" width="23" height="7" fill="#9ef0ee"/><path d="M6 1.5H17L20.5 7H2.5Z" fill="#c8c8c8" stroke="#202020" stroke-width="1"/><rect x="0" y="7" width="23" height="6" fill="#f8f020"/><rect x="0" y="13" width="23" height="3" fill="#7a1010"/><rect x="0" y="16" width="23" height="6" fill="#1a8a2a"/></svg>
<svg class="a" style="left:786px;top:166px" width="7" height="6"><rect x="0.5" y="0.5" width="1.5" height="5" fill="#202020"/><path d="M3 0.5L6.5 3L3 5.5Z" fill="#202020"/></svg>

<div id="btarea" class="a"></div>
<div class="tb" style="left:8px;top:542px;width:215px;height:21px"><div class="dots"></div><div class="grip"></div><div class="vsep" style="left:106px"></div></div>
<div class="tb" style="left:227px;top:542px;width:209px;height:21px"><div class="dots"></div><div class="grip"></div><div class="vsep" style="left:66px"></div><div class="vsep" style="left:93px"></div><div class="vsep" style="left:157px"></div></div>
<div class="tb" style="left:438px;top:542px;width:213px;height:21px"><div class="dots"></div><div class="grip"></div><div class="vsep" style="left:106px"></div></div>
<!-- magnifiers -->
<svg class="a" style="left:16px;top:544px" width="15" height="15"><line x1="1.5" y1="13.5" x2="6" y2="9" stroke="#c07a30" stroke-width="2.2"/><circle cx="9" cy="5.5" r="4.6" fill="#fff" stroke="#202830" stroke-width="1.4"/><path d="M6.5 5.5H11.5M9 3V8" stroke="#101010" stroke-width="1.4"/></svg>
<svg class="a" style="left:35.5px;top:544px" width="15" height="15"><line x1="1.5" y1="13.5" x2="6" y2="9" stroke="#c07a30" stroke-width="2.2"/><circle cx="9" cy="5.5" r="4.6" fill="#fff" stroke="#202830" stroke-width="1.4"/><path d="M6.5 5.5H11.5" stroke="#101010" stroke-width="1.6"/></svg>
<svg class="a" style="left:55px;top:544px" width="15" height="15"><line x1="1.5" y1="13.5" x2="6" y2="9" stroke="#c07a30" stroke-width="2.2"/><circle cx="9" cy="5.5" r="4.6" fill="#fff" stroke="#202830" stroke-width="1.4"/><rect x="7" y="3.5" width="4" height="4" fill="#8090c0" stroke="#304080" stroke-width="0.8"/></svg>
<svg class="a" style="left:74px;top:544px" width="15" height="15"><line x1="1.5" y1="13.5" x2="6" y2="9" stroke="#c07a30" stroke-width="2.2"/><circle cx="9" cy="5.5" r="4.6" fill="#fff" stroke="#202830" stroke-width="1.4"/><path d="M9 1.5V9.5M5 5.5H13" stroke="#101010" stroke-width="1.2"/><circle cx="9" cy="5.5" r="2" fill="none" stroke="#101010"/></svg>
<svg class="a" style="left:93.5px;top:544px" width="15" height="15"><line x1="1.5" y1="13.5" x2="6" y2="9" stroke="#c07a30" stroke-width="2.2"/><circle cx="9" cy="5.5" r="4.6" fill="#eaf6ff" stroke="#202830" stroke-width="1.4"/><circle cx="2" cy="2" r="1.3" fill="#101010"/><path d="M10 12.5H14" stroke="#101010" stroke-width="1.2"/></svg>
<!-- arrows -->
<svg class="a" style="left:120px;top:545px" width="15" height="14"><defs><linearGradient id="ab" x1="0" y1="0" x2="0" y2="1"><stop offset="0" stop-color="#4aa8f0"/><stop offset="0.5" stop-color="#1a70d8"/><stop offset="1" stop-color="#0a3aa0"/></linearGradient></defs><path d="M0 7L7 0V4H14V10H7V14Z" fill="url(#ab)"/><rect x="8" y="4" width="6" height="6" fill="#0a2a90"/></svg>
<svg class="a" style="left:139px;top:545px" width="15" height="14"><path d="M14 7L7 0V4H0V10H7V14Z" fill="url(#ab)"/><rect x="0" y="4" width="6" height="6" fill="#0a2a90"/></svg>
<svg class="a" style="left:158.5px;top:545px" width="15" height="14"><path d="M7.5 0L15 7H10.5V14H4.5V7H0Z" fill="url(#ab)"/><rect x="4.5" y="8" width="6" height="6" fill="#0a2a90"/></svg>
<svg class="a" style="left:178px;top:545px" width="15" height="14"><path d="M7.5 14L15 7H10.5V0H4.5V7H0Z" fill="url(#ab)"/><rect x="4.5" y="0" width="6" height="6" fill="#0a2a90"/></svg>
<svg class="a" style="left:198px;top:545.5px" width="13" height="13"><path d="M3 7.5V3.2Q3 2.2 3.9 2.2Q4.8 2.2 4.8 3.2V6V1.8Q4.8 0.8 5.7 0.8Q6.6 0.8 6.6 1.8V6V1.4Q6.6 0.5 7.5 0.5Q8.4 0.5 8.4 1.4V6V2.4Q8.4 1.5 9.3 1.5Q10.2 1.5 10.2 2.4V8Q10.2 12.5 6.5 12.5Q4 12.5 2.5 10.5L0.8 7.8Q0.4 6.9 1.2 6.6Q2 6.4 3 7.5Z" fill="#fff" stroke="#8a8a8a" stroke-width="0.8"/></svg>
<!-- seg2 icons -->
<svg class="a" style="left:237px;top:546px" width="11" height="12"><path d="M0.5 0.5H6L9 3.5V11.5H0.5Z" fill="#f2f2ea" stroke="#b8b8a8"/><circle cx="5.5" cy="7.5" r="2.5" fill="#e8e8e0" stroke="#a0a090"/><line x1="7.5" y1="9.5" x2="10" y2="11.5" stroke="#a0a090" stroke-width="1.2"/></svg>
<div class="txt" style="left:253.5px;top:545px;font-size:5px;font-weight:bold;color:#b02030;letter-spacing:-0.2px">DPZ</div>
<svg class="a" style="left:255px;top:549px" width="13" height="10"><rect x="2" y="1" width="9" height="8" fill="#e8e8e8" stroke="#a0a0a0" stroke-width="0.8"/><path d="M4 3V9M7 2V8" stroke="#3a3a3a" stroke-width="1.2"/><path d="M1 4H5" stroke="#40a040"/></svg>
<svg class="a" style="left:273.5px;top:546px" width="12" height="12"><rect x="0.5" y="0.5" width="6" height="9" fill="#f4f4ec" stroke="#909080"/><rect x="5.5" y="2.5" width="6" height="9" fill="#f4f4ec" stroke="#909080"/><path d="M2 3V7M8 5V10" stroke="#303030" stroke-width="1.2"/><path d="M1 6H4" stroke="#3a9a3a"/></svg>
<svg class="a" style="left:298px;top:545.5px" width="17" height="13"><rect x="1" y="0" width="15" height="5.5" fill="#fafafa"/><text x="1.6" y="5.2" font-size="6" font-weight="bold" fill="#000" font-family="Liberation Sans" letter-spacing="-0.4">DXF</text><path d="M0.5 5.5H16.5V7.5L8.5 12L0.5 7.5Z" fill="#e01818"/></svg>
<div class="txt" style="left:326px;top:545px;font-size:15px;font-weight:bold;font-family:'Liberation Serif',serif;color:#1010c8">T</div>
<svg class="a" style="left:344px;top:545px" width="14" height="14"><text x="0" y="6.5" font-size="7.5" fill="#d02040" font-family="Liberation Serif">A</text><text x="4" y="9" font-size="6" fill="#2a3aa0" font-family="Liberation Serif">B</text><text x="6.5" y="13" font-size="8.5" fill="#2a3aa0" font-family="Liberation Serif">C</text></svg>
<svg class="a" style="left:365px;top:545px" width="13" height="13"><path d="M7 5L11 0.5L12.5 2L8.5 6.5Z" fill="#203080"/><path d="M2 8Q4 4 7 5L8.5 7Q7 11 2 11Z" fill="#101830"/><path d="M1 10H5V12.5H1Z" fill="#f02040"/><path d="M4 10.5H8V12.5H4Z" fill="#fff"/><path d="M8 10H11V12H8Z" fill="#20a040"/></svg>
<svg class="a" style="left:390px;top:546px" width="14" height="12"><path d="M0.5 3H13.5" stroke="#3050c0" stroke-width="1.6"/><path d="M0.5 1V5M13.5 1V5" stroke="#3050c0"/><rect x="3" y="6" width="8" height="5" fill="#90d060"/><text x="3.2" y="10.6" font-size="5" font-weight="bold" fill="#206010" font-family="Liberation Sans">SE</text></svg>
<svg class="a" style="left:410px;top:545px" width="15" height="14"><circle cx="7.5" cy="7" r="7" fill="url(#hg)"/><text x="4.5" y="11.5" font-size="11" font-weight="bold" fill="#fff" font-family="Liberation Sans">?</text></svg>
<!-- seg3 -->
<div class="a" style="left:444px;top:543.5px;width:46px;height:16.5px;background:#4e5256;border:1px solid #9a9ea2"></div>
<div class="a" style="left:492.5px;top:543.5px;width:46.5px;height:16.5px;background:#4e5256;border:1px solid #9a9ea2"></div>
<div class="txt" id="xbox" style="left:451px;top:548.2px;font-size:8px;color:#1a1c1e">X = 11,86</div>
<div class="txt" id="ybox" style="left:501.5px;top:548.2px;font-size:8px;color:#1a1c1e">Y = -2,50</div>
<svg class="a" style="left:550px;top:545px" width="13" height="13"><circle cx="6.5" cy="6.5" r="5.6" fill="#f0f0d0" stroke="#a02020" stroke-width="1.6"/><path d="M3 6.5L9 3V10Z" fill="#30b030"/></svg>
<div class="a" style="left:566px;top:543px;width:56px;height:18px;border:1px solid #a0a4b4;border-radius:2px;background:linear-gradient(#e6eaf3 50%,#d2d9e7 50%)"></div>
<div class="txt" id="comb" style="left:574px;top:548.5px;font-size:8px;color:#202020">Comb n° 10</div>
<svg class="a" style="left:625px;top:545px" width="13" height="13"><circle cx="6.5" cy="6.5" r="5.6" fill="#f0f0d0" stroke="#a02020" stroke-width="1.6"/><path d="M10 6.5L4 3V10Z" fill="#30b030"/></svg>

<div id="bar2" class="a"></div>
<div id="status" class="a"></div>
<div class="txt" id="stat" style="left:7px;top:585.7px;font-size:8px">Aztec Informatica s.r.l. * Corso Umberto, 43 * 87050 Casole Bruzio (CS)&nbsp; *&nbsp; e-mail:&nbsp;&nbsp; aztec@aztec.it&nbsp; *&nbsp; WEB: www.aztec.it</div>
<svg class="a" style="left:783px;top:584px" width="12" height="12"><g stroke="#b8b8b8" stroke-width="1"><line x1="11" y1="3" x2="3" y2="11"/><line x1="11" y1="7" x2="7" y2="11"/></g></svg>
</body></html>
